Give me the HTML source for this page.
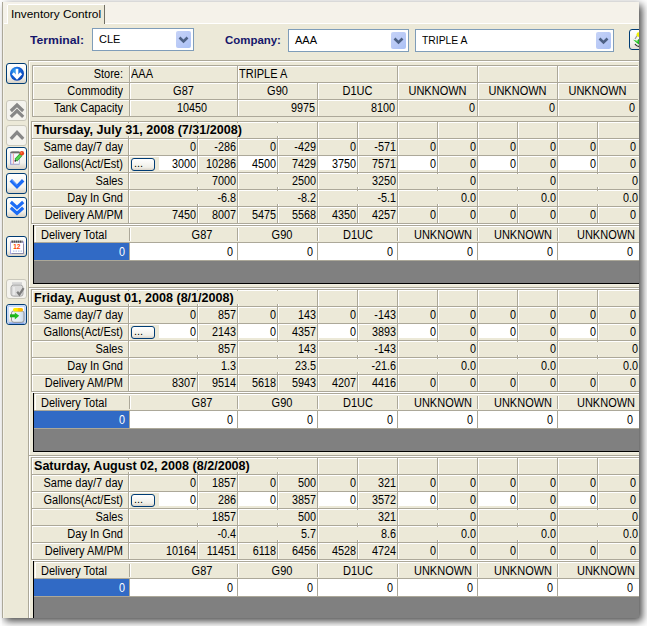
<!DOCTYPE html><html><head><meta charset="utf-8"><style>
html,body{margin:0;padding:0;}
body{width:647px;height:626px;position:relative;overflow:hidden;background:#fff;font-family:"Liberation Sans",sans-serif;font-size:11px;color:#000;}
body>div,body>svg,#w>div,#w>svg{position:absolute;}
.t{white-space:nowrap;line-height:13px;height:13px;}
</style></head><body>
<div style="left:2px;top:2px;width:637px;height:616px;background:#ece9d8;box-shadow:3px 3px 8px rgba(0,0,0,0.75)"></div>
<div style="left:0;top:2px;width:2px;height:624px;background:rgba(255,255,255,0.4)"></div>
<div id="w" style="left:0;top:0;width:639px;height:618px;overflow:hidden">

<div style="left:3px;top:2px;width:636px;height:21px;background:#f5f2ea;"></div>
<div style="left:2px;top:2px;width:1px;height:616px;background:#aca899;"></div>
<div style="left:3px;top:2px;width:1px;height:616px;background:#f4f2e8;"></div>
<div style="left:8px;top:5px;width:96px;height:18px;background:#ece9d8;"></div>
<div style="left:8px;top:4px;width:96px;height:1px;background:#ffffff;"></div>
<div style="left:7px;top:5px;width:1px;height:19px;background:#ffffff;"></div>
<div style="left:104px;top:5px;width:1px;height:19px;background:#716f64;"></div>
<div class="t" style="left:11px;top:8px;transform:scaleX(1.075);transform-origin:left top;">Inventory Control</div>
<div style="left:4px;top:23px;width:3px;height:1px;background:#ffffff;"></div>
<div style="left:105px;top:23px;width:534px;height:1px;background:#ffffff;"></div>
<div style="left:4px;top:24px;width:634px;height:593px;background:#ece9d8;"></div>
<div class="t" style="left:30px;top:34px;font-weight:bold;color:#15166a;transform:scaleX(1.11);transform-origin:left top;">Terminal:</div>
<div class="t" style="left:225px;top:34px;font-weight:bold;color:#15166a;transform:scaleX(1.04);transform-origin:left top;">Company:</div>
<div style="left:92px;top:28px;width:100px;height:21px;border:1px solid #7f9db9;background:#fff"></div>
<div style="left:176px;top:31px;width:15px;height:17px;border-radius:2px;background:linear-gradient(135deg,#c6d3f7 0%,#b7c8f6 60%,#a9c1f6 100%)"></div>
<svg style="left:176px;top:31px" width="15" height="17"><path d="M3.5 6.5 L7.5 10.5 L11.5 6.5" stroke="#4d6185" stroke-width="2.6" fill="none"/></svg>
<div class="t" style="left:99px;top:33px;">CLE</div>
<div style="left:288px;top:29px;width:119px;height:21px;border:1px solid #7f9db9;background:#fff"></div>
<div style="left:391px;top:32px;width:15px;height:17px;border-radius:2px;background:linear-gradient(135deg,#c6d3f7 0%,#b7c8f6 60%,#a9c1f6 100%)"></div>
<svg style="left:391px;top:32px" width="15" height="17"><path d="M3.5 6.5 L7.5 10.5 L11.5 6.5" stroke="#4d6185" stroke-width="2.6" fill="none"/></svg>
<div class="t" style="left:295px;top:34px;">AAA</div>
<div style="left:415px;top:29px;width:197px;height:21px;border:1px solid #7f9db9;background:#fff"></div>
<div style="left:596px;top:32px;width:15px;height:17px;border-radius:2px;background:linear-gradient(135deg,#c6d3f7 0%,#b7c8f6 60%,#a9c1f6 100%)"></div>
<svg style="left:596px;top:32px" width="15" height="17"><path d="M3.5 6.5 L7.5 10.5 L11.5 6.5" stroke="#4d6185" stroke-width="2.6" fill="none"/></svg>
<div class="t" style="left:422px;top:34px;transform:scaleX(0.94);transform-origin:left top;">TRIPLE A</div>
<div style="left:6px;top:63px;width:19px;height:19px;border:1px solid #003c74;border-radius:3px;background:linear-gradient(#ffffff,#f3f2ec 70%,#d6d0c5)"></div>
<svg style="left:6px;top:63px" width="21" height="21" viewBox="0 0 21 21"><defs><radialGradient id="gc" cx="0.35" cy="0.3" r="0.75"><stop offset="0" stop-color="#39a6f2"/><stop offset="0.45" stop-color="#1466dc"/><stop offset="1" stop-color="#0a3fae"/></radialGradient></defs><circle cx="11" cy="10.8" r="7" fill="url(#gc)"/><path d="M11 5.8 V13.5" stroke="#fff" stroke-width="2.6" fill="none"/><path d="M6.8 10.2 L11 14.6 L15.2 10.2" stroke="#fff" stroke-width="2.8" fill="none" stroke-linejoin="miter"/></svg>
<div style="left:6px;top:100px;width:19px;height:19px;border:1px solid #cac8bb;border-radius:3px;background:#f4f3ee"></div>
<svg style="left:6px;top:100px" width="21" height="21" viewBox="0 0 21 21"><path d="M4.8 11 L11 5 L17.2 11 M4.8 16.8 L11 10.8 L17.2 16.8" stroke="#878787" stroke-width="3.2" fill="none"/></svg>
<div style="left:6px;top:125px;width:19px;height:19px;border:1px solid #cac8bb;border-radius:3px;background:#f4f3ee"></div>
<svg style="left:6px;top:125px" width="21" height="21" viewBox="0 0 21 21"><path d="M4.8 13.8 L11 7.4 L17.2 13.8" stroke="#878787" stroke-width="3.2" fill="none"/></svg>
<div style="left:6px;top:147px;width:19px;height:21px;border:1px solid #003c74;border-radius:3px;background:linear-gradient(#ffffff,#f3f2ec 70%,#d6d0c5)"></div>
<svg style="left:6px;top:147px" width="21" height="23" viewBox="0 0 21 23"><defs><linearGradient id="bind" x1="0" y1="0" x2="0" y2="1"><stop offset="0" stop-color="#c8c8c8"/><stop offset="0.5" stop-color="#5a5a5a"/><stop offset="1" stop-color="#9a9a9a"/></linearGradient><linearGradient id="pg" x1="0" x2="1"><stop offset="0" stop-color="#e6f0ff"/><stop offset="1" stop-color="#ffffff"/></linearGradient></defs><path d="M4.6 5.5 H13.4 V17.6 H4.6 Z" fill="url(#pg)" stroke="#b0b0d8" stroke-width="0.9"/><path d="M4.2 6 Q4.2 4 6.5 4 H12.8 Q14 4 14 5.5 L14 6.4 H4.2 Z" fill="url(#bind)"/><path d="M4.6 7 V17.6" stroke="#9c9ce0" stroke-width="1.1"/><path d="M7.4 6.5 V17" stroke="#f4a0a0" stroke-width="1"/><path d="M5 17.2 H13" stroke="#a8a8c8" stroke-width="0.8"/><path d="M9.8 13.2 L15.2 7.5" stroke="#2a9a2a" stroke-width="3.6"/><path d="M9.8 13.2 L15.2 7.5" stroke="#52d852" stroke-width="2.2"/><path d="M8.8 14.4 L10 13" stroke="#303030" stroke-width="1.6"/><circle cx="15.9" cy="6.3" r="2.2" fill="#e8401a"/><circle cx="15.4" cy="5.8" r="0.9" fill="#ff8040"/></svg>
<div style="left:6px;top:173px;width:19px;height:19px;border:1px solid #003c74;border-radius:3px;background:linear-gradient(#ffffff,#f3f2ec 70%,#d6d0c5)"></div>
<svg style="left:6px;top:173px" width="21" height="21" viewBox="0 0 21 21"><path d="M4.8 7.2 L11 13.6 L17.2 7.2" stroke="#1c6cf6" stroke-width="3.4" fill="none"/><path d="M5.6 6.8 L11 12.4" stroke="#7fb0ff" stroke-width="0.8" fill="none"/></svg>
<div style="left:6px;top:197px;width:19px;height:19px;border:1px solid #003c74;border-radius:3px;background:linear-gradient(#ffffff,#f3f2ec 70%,#d6d0c5)"></div>
<svg style="left:6px;top:197px" width="21" height="21" viewBox="0 0 21 21"><path d="M4.8 5 L11 10.6 L17.2 5 M4.8 10.8 L11 16.4 L17.2 10.8" stroke="#1c6cf6" stroke-width="3.2" fill="none"/></svg>
<div style="left:6px;top:236px;width:19px;height:19px;border:1px solid #003c74;border-radius:3px;background:linear-gradient(#ffffff,#f3f2ec 70%,#d6d0c5)"></div>
<svg style="left:6px;top:236px" width="21" height="21" viewBox="0 0 21 21"><rect x="4.5" y="6" width="13" height="11.5" fill="#fff" stroke="#a8a8e4" stroke-width="1"/><path d="M17.5 8 V17.5 H6" stroke="#8888a0" stroke-width="0.8" fill="none"/><path d="M5.5 5.6 H16.5" stroke="#404040" stroke-width="2.4" stroke-dasharray="1.4 0.6"/><text x="7.2" y="13.2" font-family="Liberation Sans" font-weight="bold" font-size="6.6" fill="#ff4800">12</text><path d="M7 15.2 H16" stroke="#b8c8f0" stroke-width="1.2" stroke-dasharray="1.5 1"/></svg>
<div style="left:6px;top:279px;width:19px;height:18px;border:1px solid #cac8bb;border-radius:3px;background:#f4f3ee"></div>
<svg style="left:6px;top:279px" width="21" height="20" viewBox="0 0 21 20"><rect x="6" y="3.2" width="10" height="3" fill="#d4d4d4"/><path d="M5 8.5 Q5 6.2 7.5 6.2 H14.5 Q17 6.2 17 8.5 V15 Q17 17.2 14.5 17.2 H7.5 Q5 17.2 5 15 Z" fill="#dadada" stroke="#a4a4a4" stroke-width="0.9"/><path d="M8 8 V16" stroke="#eeeeee" stroke-width="1.5"/><path d="M11.2 12.8 L13.4 15.6 L17.6 9.2" stroke="#7c7c7c" stroke-width="2.2" fill="none"/></svg>
<div style="left:6px;top:304px;width:19px;height:19px;border:1px solid #003c74;border-radius:3px;background:linear-gradient(#ffffff,#f3f2ec 70%,#d6d0c5)"></div>
<svg style="left:6px;top:304px" width="21" height="21" viewBox="0 0 21 21"><defs><linearGradient id="lid" x1="0" x2="1"><stop offset="0" stop-color="#fff000"/><stop offset="0.5" stop-color="#ffe000"/><stop offset="0.55" stop-color="#ffc000"/><stop offset="1" stop-color="#f8b000"/></linearGradient><linearGradient id="jar" x1="0" x2="1"><stop offset="0" stop-color="#f4f4f4"/><stop offset="0.6" stop-color="#e4eef8"/><stop offset="1" stop-color="#c8d8e8"/></linearGradient></defs><rect x="2" y="2" width="17" height="17" rx="1" fill="none" stroke="#b4cdf6" stroke-width="1.4"/><path d="M3 19.2 H18" stroke="#7aa0f0" stroke-width="1.2"/><path d="M5.5 9 Q5.5 7 7.5 7 H16 Q18 7 18 9 V16 Q18 18.3 15.5 18.3 H8 Q5.5 18.3 5.5 16 Z" fill="url(#jar)" stroke="#8c8c8c" stroke-width="0.9"/><rect x="7" y="4" width="10" height="3.4" rx="1.6" fill="url(#lid)"/><path d="M4 11.8 H9.8" stroke="#18b018" stroke-width="3" fill="none"/><path d="M8.8 8.6 L13.2 11.8 L8.8 15.4 Z" fill="#20c020"/></svg>
<div style="left:629px;top:29px;width:10px;height:21px;overflow:hidden"><div style="position:absolute;left:0;top:0;width:19px;height:19px;border:1px solid #003c74;border-radius:3px;background:linear-gradient(#fff,#f3f2ee 70%,#e0dcd2)"></div><svg style="position:absolute;left:0;top:0" width="21" height="21"><path d="M8.2 6.5 L6 10" stroke="#999" stroke-width="1.2" fill="none"/><path d="M6 15 Q7.5 17.5 10 17.5" stroke="#333" stroke-width="1.3" fill="none"/><circle cx="9.8" cy="5.6" r="2.3" fill="#f4f400"/><path d="M3.8 10.6 L8 12.2 L9.2 10.2 L10 10.2 L10 15.5 L8.5 14.6 Z" fill="#18b818"/><path d="M6 11.5 L9.5 13" stroke="#60e060" stroke-width="1" fill="none"/></svg></div>
<div style="left:28px;top:60px;width:1px;height:558px;background:#aca899;"></div>
<div style="left:29px;top:61px;width:1px;height:557px;background:#ffffff;"></div>
<div style="left:28px;top:60px;width:611px;height:1px;background:#aca899;"></div>
<div style="left:29px;top:61px;width:610px;height:1px;background:#ffffff;"></div>
<div style="left:32px;top:65px;width:606px;height:1px;background:#aca899;"></div>
<div style="left:33px;top:66px;width:605px;height:1px;background:#ffffff;"></div>
<div style="left:129px;top:65px;width:1px;height:17px;background:#aca899;"></div>
<div style="left:130px;top:66px;width:1px;height:16px;background:#ffffff;"></div>
<div style="left:237px;top:65px;width:1px;height:17px;background:#aca899;"></div>
<div style="left:238px;top:66px;width:1px;height:16px;background:#ffffff;"></div>
<div style="left:397px;top:65px;width:1px;height:17px;background:#aca899;"></div>
<div style="left:398px;top:66px;width:1px;height:16px;background:#ffffff;"></div>
<div style="left:477px;top:65px;width:1px;height:17px;background:#aca899;"></div>
<div style="left:478px;top:66px;width:1px;height:16px;background:#ffffff;"></div>
<div style="left:557px;top:65px;width:1px;height:17px;background:#aca899;"></div>
<div style="left:558px;top:66px;width:1px;height:16px;background:#ffffff;"></div>
<div style="left:32px;top:65px;width:1px;height:17px;background:#aca899;"></div>
<div style="left:33px;top:66px;width:1px;height:16px;background:#ffffff;"></div>
<div style="left:32px;top:82px;width:606px;height:1px;background:#aca899;"></div>
<div style="left:33px;top:83px;width:605px;height:1px;background:#ffffff;"></div>
<div style="left:129px;top:82px;width:1px;height:17px;background:#aca899;"></div>
<div style="left:130px;top:83px;width:1px;height:16px;background:#ffffff;"></div>
<div style="left:237px;top:82px;width:1px;height:17px;background:#aca899;"></div>
<div style="left:238px;top:83px;width:1px;height:16px;background:#ffffff;"></div>
<div style="left:317px;top:82px;width:1px;height:17px;background:#aca899;"></div>
<div style="left:318px;top:83px;width:1px;height:16px;background:#ffffff;"></div>
<div style="left:397px;top:82px;width:1px;height:17px;background:#aca899;"></div>
<div style="left:398px;top:83px;width:1px;height:16px;background:#ffffff;"></div>
<div style="left:477px;top:82px;width:1px;height:17px;background:#aca899;"></div>
<div style="left:478px;top:83px;width:1px;height:16px;background:#ffffff;"></div>
<div style="left:557px;top:82px;width:1px;height:17px;background:#aca899;"></div>
<div style="left:558px;top:83px;width:1px;height:16px;background:#ffffff;"></div>
<div style="left:32px;top:82px;width:1px;height:17px;background:#aca899;"></div>
<div style="left:33px;top:83px;width:1px;height:16px;background:#ffffff;"></div>
<div style="left:32px;top:99px;width:606px;height:1px;background:#aca899;"></div>
<div style="left:33px;top:100px;width:605px;height:1px;background:#ffffff;"></div>
<div style="left:129px;top:99px;width:1px;height:17px;background:#aca899;"></div>
<div style="left:130px;top:100px;width:1px;height:16px;background:#ffffff;"></div>
<div style="left:237px;top:99px;width:1px;height:17px;background:#aca899;"></div>
<div style="left:238px;top:100px;width:1px;height:16px;background:#ffffff;"></div>
<div style="left:317px;top:99px;width:1px;height:17px;background:#aca899;"></div>
<div style="left:318px;top:100px;width:1px;height:16px;background:#ffffff;"></div>
<div style="left:397px;top:99px;width:1px;height:17px;background:#aca899;"></div>
<div style="left:398px;top:100px;width:1px;height:16px;background:#ffffff;"></div>
<div style="left:477px;top:99px;width:1px;height:17px;background:#aca899;"></div>
<div style="left:478px;top:100px;width:1px;height:16px;background:#ffffff;"></div>
<div style="left:557px;top:99px;width:1px;height:17px;background:#aca899;"></div>
<div style="left:558px;top:100px;width:1px;height:16px;background:#ffffff;"></div>
<div style="left:32px;top:99px;width:1px;height:17px;background:#aca899;"></div>
<div style="left:33px;top:100px;width:1px;height:16px;background:#ffffff;"></div>
<div style="left:32px;top:116px;width:606px;height:1px;background:#aca899;"></div>
<div class="t" style="left:-77px;top:67px;width:200px;text-align:right;font-size:12px;line-height:14px;height:14px;transform:scaleX(0.917);transform-origin:right top;">Store:</div>
<div class="t" style="left:131px;top:67px;font-size:12px;line-height:14px;height:14px;transform:scaleX(0.917);transform-origin:left top;">AAA</div>
<div class="t" style="left:239px;top:67px;font-size:12px;line-height:14px;height:14px;transform:scaleX(0.917);transform-origin:left top;">TRIPLE A</div>
<div class="t" style="left:-77px;top:84px;width:200px;text-align:right;font-size:12px;line-height:14px;height:14px;transform:scaleX(0.917);transform-origin:right top;">Commodity</div>
<div class="t" style="left:130px;top:84px;width:107px;text-align:center;font-size:12px;line-height:14px;height:14px;transform:scaleX(0.917);transform-origin:center top;">G87</div>
<div class="t" style="left:238px;top:84px;width:79px;text-align:center;font-size:12px;line-height:14px;height:14px;transform:scaleX(0.917);transform-origin:center top;">G90</div>
<div class="t" style="left:318px;top:84px;width:79px;text-align:center;font-size:12px;line-height:14px;height:14px;transform:scaleX(0.917);transform-origin:center top;">D1UC</div>
<div class="t" style="left:398px;top:84px;width:79px;text-align:center;font-size:12px;line-height:14px;height:14px;transform:scaleX(0.917);transform-origin:center top;">UNKNOWN</div>
<div class="t" style="left:478px;top:84px;width:79px;text-align:center;font-size:12px;line-height:14px;height:14px;transform:scaleX(0.917);transform-origin:center top;">UNKNOWN</div>
<div class="t" style="left:558px;top:84px;width:79px;text-align:center;font-size:12px;line-height:14px;height:14px;transform:scaleX(0.917);transform-origin:center top;">UNKNOWN</div>
<div class="t" style="left:-77px;top:101px;width:200px;text-align:right;font-size:12px;line-height:14px;height:14px;transform:scaleX(0.917);transform-origin:right top;">Tank Capacity</div>
<div class="t" style="left:7px;top:101px;width:200px;text-align:right;font-size:12px;line-height:14px;height:14px;transform:scaleX(0.9);transform-origin:right top;">10450</div>
<div class="t" style="left:115px;top:101px;width:200px;text-align:right;font-size:12px;line-height:14px;height:14px;transform:scaleX(0.9);transform-origin:right top;">9975</div>
<div class="t" style="left:195px;top:101px;width:200px;text-align:right;font-size:12px;line-height:14px;height:14px;transform:scaleX(0.9);transform-origin:right top;">8100</div>
<div class="t" style="left:275px;top:101px;width:200px;text-align:right;font-size:12px;line-height:14px;height:14px;transform:scaleX(0.9);transform-origin:right top;">0</div>
<div class="t" style="left:355px;top:101px;width:200px;text-align:right;font-size:12px;line-height:14px;height:14px;transform:scaleX(0.9);transform-origin:right top;">0</div>
<div class="t" style="left:435px;top:101px;width:200px;text-align:right;font-size:12px;line-height:14px;height:14px;transform:scaleX(0.9);transform-origin:right top;">0</div>
<div style="left:31px;top:121px;width:608px;height:1px;background:#aca899;"></div>
<div style="left:32px;top:122px;width:607px;height:1px;background:#ffffff;"></div>
<div style="left:317px;top:121px;width:1px;height:17px;background:#aca899;"></div>
<div style="left:318px;top:122px;width:1px;height:16px;background:#ffffff;"></div>
<div style="left:357px;top:121px;width:1px;height:17px;background:#aca899;"></div>
<div style="left:358px;top:122px;width:1px;height:16px;background:#ffffff;"></div>
<div style="left:397px;top:121px;width:1px;height:17px;background:#aca899;"></div>
<div style="left:398px;top:122px;width:1px;height:16px;background:#ffffff;"></div>
<div style="left:437px;top:121px;width:1px;height:17px;background:#aca899;"></div>
<div style="left:438px;top:122px;width:1px;height:16px;background:#ffffff;"></div>
<div style="left:477px;top:121px;width:1px;height:17px;background:#aca899;"></div>
<div style="left:478px;top:122px;width:1px;height:16px;background:#ffffff;"></div>
<div style="left:517px;top:121px;width:1px;height:17px;background:#aca899;"></div>
<div style="left:518px;top:122px;width:1px;height:16px;background:#ffffff;"></div>
<div style="left:557px;top:121px;width:1px;height:17px;background:#aca899;"></div>
<div style="left:558px;top:122px;width:1px;height:16px;background:#ffffff;"></div>
<div style="left:597px;top:121px;width:1px;height:17px;background:#aca899;"></div>
<div style="left:598px;top:122px;width:1px;height:16px;background:#ffffff;"></div>
<div style="left:31px;top:121px;width:1px;height:103px;background:#aca899;"></div>
<div style="left:32px;top:122px;width:1px;height:102px;background:#ffffff;"></div>
<div style="left:128px;top:122px;width:1px;height:1px;background:#aca899;"></div>
<div style="left:128px;top:136px;width:1px;height:2px;background:#aca899;"></div>
<div style="left:129px;top:136px;width:1px;height:2px;background:#ffffff;"></div>
<div style="left:197px;top:122px;width:1px;height:1px;background:#aca899;"></div>
<div style="left:197px;top:136px;width:1px;height:2px;background:#aca899;"></div>
<div style="left:198px;top:136px;width:1px;height:2px;background:#ffffff;"></div>
<div style="left:237px;top:122px;width:1px;height:1px;background:#aca899;"></div>
<div style="left:237px;top:136px;width:1px;height:2px;background:#aca899;"></div>
<div style="left:238px;top:136px;width:1px;height:2px;background:#ffffff;"></div>
<div style="left:277px;top:122px;width:1px;height:1px;background:#aca899;"></div>
<div style="left:277px;top:136px;width:1px;height:2px;background:#aca899;"></div>
<div style="left:278px;top:136px;width:1px;height:2px;background:#ffffff;"></div>
<div class="t" style="left:34px;top:123px;font-weight:bold;font-size:12px;line-height:14px;height:14px;transform:scaleX(1.047);transform-origin:left top;">Thursday, July 31, 2008 (7/31/2008)</div>
<div style="left:31px;top:138px;width:608px;height:1px;background:#aca899;"></div>
<div style="left:32px;top:139px;width:607px;height:1px;background:#ffffff;"></div>
<div style="left:128px;top:138px;width:1px;height:17px;background:#aca899;"></div>
<div style="left:129px;top:139px;width:1px;height:16px;background:#ffffff;"></div>
<div style="left:197px;top:138px;width:1px;height:17px;background:#aca899;"></div>
<div style="left:198px;top:139px;width:1px;height:16px;background:#ffffff;"></div>
<div style="left:237px;top:138px;width:1px;height:17px;background:#aca899;"></div>
<div style="left:238px;top:139px;width:1px;height:16px;background:#ffffff;"></div>
<div style="left:277px;top:138px;width:1px;height:17px;background:#aca899;"></div>
<div style="left:278px;top:139px;width:1px;height:16px;background:#ffffff;"></div>
<div style="left:317px;top:138px;width:1px;height:17px;background:#aca899;"></div>
<div style="left:318px;top:139px;width:1px;height:16px;background:#ffffff;"></div>
<div style="left:357px;top:138px;width:1px;height:17px;background:#aca899;"></div>
<div style="left:358px;top:139px;width:1px;height:16px;background:#ffffff;"></div>
<div style="left:397px;top:138px;width:1px;height:17px;background:#aca899;"></div>
<div style="left:398px;top:139px;width:1px;height:16px;background:#ffffff;"></div>
<div style="left:437px;top:138px;width:1px;height:17px;background:#aca899;"></div>
<div style="left:438px;top:139px;width:1px;height:16px;background:#ffffff;"></div>
<div style="left:477px;top:138px;width:1px;height:17px;background:#aca899;"></div>
<div style="left:478px;top:139px;width:1px;height:16px;background:#ffffff;"></div>
<div style="left:517px;top:138px;width:1px;height:17px;background:#aca899;"></div>
<div style="left:518px;top:139px;width:1px;height:16px;background:#ffffff;"></div>
<div style="left:557px;top:138px;width:1px;height:17px;background:#aca899;"></div>
<div style="left:558px;top:139px;width:1px;height:16px;background:#ffffff;"></div>
<div style="left:597px;top:138px;width:1px;height:17px;background:#aca899;"></div>
<div style="left:598px;top:139px;width:1px;height:16px;background:#ffffff;"></div>
<div class="t" style="left:-77px;top:140px;width:200px;text-align:right;font-size:12px;line-height:14px;height:14px;transform:scaleX(0.917);transform-origin:right top;">Same day/7 day</div>
<div class="t" style="left:-4px;top:140px;width:200px;text-align:right;font-size:12px;line-height:14px;height:14px;transform:scaleX(0.9);transform-origin:right top;">0</div>
<div class="t" style="left:36px;top:140px;width:200px;text-align:right;font-size:12px;line-height:14px;height:14px;transform:scaleX(0.9);transform-origin:right top;">-286</div>
<div class="t" style="left:76px;top:140px;width:200px;text-align:right;font-size:12px;line-height:14px;height:14px;transform:scaleX(0.9);transform-origin:right top;">0</div>
<div class="t" style="left:116px;top:140px;width:200px;text-align:right;font-size:12px;line-height:14px;height:14px;transform:scaleX(0.9);transform-origin:right top;">-429</div>
<div class="t" style="left:156px;top:140px;width:200px;text-align:right;font-size:12px;line-height:14px;height:14px;transform:scaleX(0.9);transform-origin:right top;">0</div>
<div class="t" style="left:196px;top:140px;width:200px;text-align:right;font-size:12px;line-height:14px;height:14px;transform:scaleX(0.9);transform-origin:right top;">-571</div>
<div class="t" style="left:236px;top:140px;width:200px;text-align:right;font-size:12px;line-height:14px;height:14px;transform:scaleX(0.9);transform-origin:right top;">0</div>
<div class="t" style="left:276px;top:140px;width:200px;text-align:right;font-size:12px;line-height:14px;height:14px;transform:scaleX(0.9);transform-origin:right top;">0</div>
<div class="t" style="left:316px;top:140px;width:200px;text-align:right;font-size:12px;line-height:14px;height:14px;transform:scaleX(0.9);transform-origin:right top;">0</div>
<div class="t" style="left:356px;top:140px;width:200px;text-align:right;font-size:12px;line-height:14px;height:14px;transform:scaleX(0.9);transform-origin:right top;">0</div>
<div class="t" style="left:396px;top:140px;width:200px;text-align:right;font-size:12px;line-height:14px;height:14px;transform:scaleX(0.9);transform-origin:right top;">0</div>
<div class="t" style="left:436px;top:140px;width:200px;text-align:right;font-size:12px;line-height:14px;height:14px;transform:scaleX(0.9);transform-origin:right top;">0</div>
<div style="left:31px;top:155px;width:608px;height:1px;background:#aca899;"></div>
<div style="left:32px;top:156px;width:607px;height:1px;background:#ffffff;"></div>
<div style="left:128px;top:155px;width:1px;height:17px;background:#aca899;"></div>
<div style="left:129px;top:156px;width:1px;height:16px;background:#ffffff;"></div>
<div style="left:197px;top:155px;width:1px;height:17px;background:#aca899;"></div>
<div style="left:198px;top:156px;width:1px;height:16px;background:#ffffff;"></div>
<div style="left:237px;top:155px;width:1px;height:17px;background:#aca899;"></div>
<div style="left:238px;top:156px;width:1px;height:16px;background:#ffffff;"></div>
<div style="left:277px;top:155px;width:1px;height:17px;background:#aca899;"></div>
<div style="left:278px;top:156px;width:1px;height:16px;background:#ffffff;"></div>
<div style="left:317px;top:155px;width:1px;height:17px;background:#aca899;"></div>
<div style="left:318px;top:156px;width:1px;height:16px;background:#ffffff;"></div>
<div style="left:357px;top:155px;width:1px;height:17px;background:#aca899;"></div>
<div style="left:358px;top:156px;width:1px;height:16px;background:#ffffff;"></div>
<div style="left:397px;top:155px;width:1px;height:17px;background:#aca899;"></div>
<div style="left:398px;top:156px;width:1px;height:16px;background:#ffffff;"></div>
<div style="left:437px;top:155px;width:1px;height:17px;background:#aca899;"></div>
<div style="left:438px;top:156px;width:1px;height:16px;background:#ffffff;"></div>
<div style="left:477px;top:155px;width:1px;height:17px;background:#aca899;"></div>
<div style="left:478px;top:156px;width:1px;height:16px;background:#ffffff;"></div>
<div style="left:517px;top:155px;width:1px;height:17px;background:#aca899;"></div>
<div style="left:518px;top:156px;width:1px;height:16px;background:#ffffff;"></div>
<div style="left:557px;top:155px;width:1px;height:17px;background:#aca899;"></div>
<div style="left:558px;top:156px;width:1px;height:16px;background:#ffffff;"></div>
<div style="left:597px;top:155px;width:1px;height:17px;background:#aca899;"></div>
<div style="left:598px;top:156px;width:1px;height:16px;background:#ffffff;"></div>
<div class="t" style="left:-77px;top:157px;width:200px;text-align:right;font-size:12px;line-height:14px;height:14px;transform:scaleX(0.917);transform-origin:right top;">Gallons(Act/Est)</div>
<div style="left:131px;top:158px;width:22px;height:11px;border:1px solid #003c74;border-radius:3px;background:linear-gradient(#fff,#f0efe8 75%,#d9d3c8)"></div>
<div class="t" style="left:134px;top:157px;">...</div>
<div style="left:159px;top:157px;width:38px;height:13px;background:#ffffff;"></div>
<div style="left:238px;top:156px;width:39px;height:14px;background:#ffffff;"></div>
<div style="left:318px;top:156px;width:39px;height:14px;background:#ffffff;"></div>
<div style="left:398px;top:156px;width:39px;height:14px;background:#ffffff;"></div>
<div style="left:478px;top:156px;width:39px;height:14px;background:#ffffff;"></div>
<div style="left:558px;top:156px;width:39px;height:14px;background:#ffffff;"></div>
<div class="t" style="left:-4px;top:157px;width:200px;text-align:right;font-size:12px;line-height:14px;height:14px;transform:scaleX(0.9);transform-origin:right top;">3000</div>
<div class="t" style="left:36px;top:157px;width:200px;text-align:right;font-size:12px;line-height:14px;height:14px;transform:scaleX(0.9);transform-origin:right top;">10286</div>
<div class="t" style="left:76px;top:157px;width:200px;text-align:right;font-size:12px;line-height:14px;height:14px;transform:scaleX(0.9);transform-origin:right top;">4500</div>
<div class="t" style="left:116px;top:157px;width:200px;text-align:right;font-size:12px;line-height:14px;height:14px;transform:scaleX(0.9);transform-origin:right top;">7429</div>
<div class="t" style="left:156px;top:157px;width:200px;text-align:right;font-size:12px;line-height:14px;height:14px;transform:scaleX(0.9);transform-origin:right top;">3750</div>
<div class="t" style="left:196px;top:157px;width:200px;text-align:right;font-size:12px;line-height:14px;height:14px;transform:scaleX(0.9);transform-origin:right top;">7571</div>
<div class="t" style="left:236px;top:157px;width:200px;text-align:right;font-size:12px;line-height:14px;height:14px;transform:scaleX(0.9);transform-origin:right top;">0</div>
<div class="t" style="left:276px;top:157px;width:200px;text-align:right;font-size:12px;line-height:14px;height:14px;transform:scaleX(0.9);transform-origin:right top;">0</div>
<div class="t" style="left:316px;top:157px;width:200px;text-align:right;font-size:12px;line-height:14px;height:14px;transform:scaleX(0.9);transform-origin:right top;">0</div>
<div class="t" style="left:356px;top:157px;width:200px;text-align:right;font-size:12px;line-height:14px;height:14px;transform:scaleX(0.9);transform-origin:right top;">0</div>
<div class="t" style="left:396px;top:157px;width:200px;text-align:right;font-size:12px;line-height:14px;height:14px;transform:scaleX(0.9);transform-origin:right top;">0</div>
<div class="t" style="left:436px;top:157px;width:200px;text-align:right;font-size:12px;line-height:14px;height:14px;transform:scaleX(0.9);transform-origin:right top;">0</div>
<div style="left:31px;top:172px;width:608px;height:1px;background:#aca899;"></div>
<div style="left:32px;top:173px;width:607px;height:1px;background:#ffffff;"></div>
<div style="left:128px;top:172px;width:1px;height:17px;background:#aca899;"></div>
<div style="left:129px;top:173px;width:1px;height:16px;background:#ffffff;"></div>
<div style="left:237px;top:172px;width:1px;height:17px;background:#aca899;"></div>
<div style="left:238px;top:173px;width:1px;height:16px;background:#ffffff;"></div>
<div style="left:317px;top:172px;width:1px;height:17px;background:#aca899;"></div>
<div style="left:318px;top:173px;width:1px;height:16px;background:#ffffff;"></div>
<div style="left:397px;top:172px;width:1px;height:17px;background:#aca899;"></div>
<div style="left:398px;top:173px;width:1px;height:16px;background:#ffffff;"></div>
<div style="left:477px;top:172px;width:1px;height:17px;background:#aca899;"></div>
<div style="left:478px;top:173px;width:1px;height:16px;background:#ffffff;"></div>
<div style="left:557px;top:172px;width:1px;height:17px;background:#aca899;"></div>
<div style="left:558px;top:173px;width:1px;height:16px;background:#ffffff;"></div>
<div style="left:197px;top:173px;width:1px;height:1px;background:#aca899;"></div>
<div style="left:197px;top:187px;width:1px;height:2px;background:#aca899;"></div>
<div style="left:198px;top:187px;width:1px;height:2px;background:#ffffff;"></div>
<div style="left:277px;top:173px;width:1px;height:1px;background:#aca899;"></div>
<div style="left:277px;top:187px;width:1px;height:2px;background:#aca899;"></div>
<div style="left:278px;top:187px;width:1px;height:2px;background:#ffffff;"></div>
<div style="left:357px;top:173px;width:1px;height:1px;background:#aca899;"></div>
<div style="left:357px;top:187px;width:1px;height:2px;background:#aca899;"></div>
<div style="left:358px;top:187px;width:1px;height:2px;background:#ffffff;"></div>
<div style="left:437px;top:173px;width:1px;height:1px;background:#aca899;"></div>
<div style="left:437px;top:187px;width:1px;height:2px;background:#aca899;"></div>
<div style="left:438px;top:187px;width:1px;height:2px;background:#ffffff;"></div>
<div style="left:517px;top:173px;width:1px;height:1px;background:#aca899;"></div>
<div style="left:517px;top:187px;width:1px;height:2px;background:#aca899;"></div>
<div style="left:518px;top:187px;width:1px;height:2px;background:#ffffff;"></div>
<div style="left:597px;top:173px;width:1px;height:1px;background:#aca899;"></div>
<div style="left:597px;top:187px;width:1px;height:2px;background:#aca899;"></div>
<div style="left:598px;top:187px;width:1px;height:2px;background:#ffffff;"></div>
<div class="t" style="left:-77px;top:174px;width:200px;text-align:right;font-size:12px;line-height:14px;height:14px;transform:scaleX(0.917);transform-origin:right top;">Sales</div>
<div class="t" style="left:36px;top:174px;width:200px;text-align:right;font-size:12px;line-height:14px;height:14px;transform:scaleX(0.9);transform-origin:right top;">7000</div>
<div class="t" style="left:116px;top:174px;width:200px;text-align:right;font-size:12px;line-height:14px;height:14px;transform:scaleX(0.9);transform-origin:right top;">2500</div>
<div class="t" style="left:196px;top:174px;width:200px;text-align:right;font-size:12px;line-height:14px;height:14px;transform:scaleX(0.9);transform-origin:right top;">3250</div>
<div class="t" style="left:276px;top:174px;width:200px;text-align:right;font-size:12px;line-height:14px;height:14px;transform:scaleX(0.9);transform-origin:right top;">0</div>
<div class="t" style="left:356px;top:174px;width:200px;text-align:right;font-size:12px;line-height:14px;height:14px;transform:scaleX(0.9);transform-origin:right top;">0</div>
<div class="t" style="left:438px;top:174px;width:200px;text-align:right;font-size:12px;line-height:14px;height:14px;transform:scaleX(0.9);transform-origin:right top;">0</div>
<div style="left:31px;top:189px;width:608px;height:1px;background:#aca899;"></div>
<div style="left:32px;top:190px;width:607px;height:1px;background:#ffffff;"></div>
<div style="left:128px;top:189px;width:1px;height:17px;background:#aca899;"></div>
<div style="left:129px;top:190px;width:1px;height:16px;background:#ffffff;"></div>
<div style="left:237px;top:189px;width:1px;height:17px;background:#aca899;"></div>
<div style="left:238px;top:190px;width:1px;height:16px;background:#ffffff;"></div>
<div style="left:317px;top:189px;width:1px;height:17px;background:#aca899;"></div>
<div style="left:318px;top:190px;width:1px;height:16px;background:#ffffff;"></div>
<div style="left:397px;top:189px;width:1px;height:17px;background:#aca899;"></div>
<div style="left:398px;top:190px;width:1px;height:16px;background:#ffffff;"></div>
<div style="left:477px;top:189px;width:1px;height:17px;background:#aca899;"></div>
<div style="left:478px;top:190px;width:1px;height:16px;background:#ffffff;"></div>
<div style="left:557px;top:189px;width:1px;height:17px;background:#aca899;"></div>
<div style="left:558px;top:190px;width:1px;height:16px;background:#ffffff;"></div>
<div style="left:197px;top:190px;width:1px;height:1px;background:#aca899;"></div>
<div style="left:197px;top:204px;width:1px;height:2px;background:#aca899;"></div>
<div style="left:198px;top:204px;width:1px;height:2px;background:#ffffff;"></div>
<div style="left:277px;top:190px;width:1px;height:1px;background:#aca899;"></div>
<div style="left:277px;top:204px;width:1px;height:2px;background:#aca899;"></div>
<div style="left:278px;top:204px;width:1px;height:2px;background:#ffffff;"></div>
<div style="left:357px;top:190px;width:1px;height:1px;background:#aca899;"></div>
<div style="left:357px;top:204px;width:1px;height:2px;background:#aca899;"></div>
<div style="left:358px;top:204px;width:1px;height:2px;background:#ffffff;"></div>
<div style="left:437px;top:190px;width:1px;height:1px;background:#aca899;"></div>
<div style="left:437px;top:204px;width:1px;height:2px;background:#aca899;"></div>
<div style="left:438px;top:204px;width:1px;height:2px;background:#ffffff;"></div>
<div style="left:517px;top:190px;width:1px;height:1px;background:#aca899;"></div>
<div style="left:517px;top:204px;width:1px;height:2px;background:#aca899;"></div>
<div style="left:518px;top:204px;width:1px;height:2px;background:#ffffff;"></div>
<div style="left:597px;top:190px;width:1px;height:1px;background:#aca899;"></div>
<div style="left:597px;top:204px;width:1px;height:2px;background:#aca899;"></div>
<div style="left:598px;top:204px;width:1px;height:2px;background:#ffffff;"></div>
<div class="t" style="left:-77px;top:191px;width:200px;text-align:right;font-size:12px;line-height:14px;height:14px;transform:scaleX(0.917);transform-origin:right top;">Day In Gnd</div>
<div class="t" style="left:36px;top:191px;width:200px;text-align:right;font-size:12px;line-height:14px;height:14px;transform:scaleX(0.9);transform-origin:right top;">-6.8</div>
<div class="t" style="left:116px;top:191px;width:200px;text-align:right;font-size:12px;line-height:14px;height:14px;transform:scaleX(0.9);transform-origin:right top;">-8.2</div>
<div class="t" style="left:196px;top:191px;width:200px;text-align:right;font-size:12px;line-height:14px;height:14px;transform:scaleX(0.9);transform-origin:right top;">-5.1</div>
<div class="t" style="left:276px;top:191px;width:200px;text-align:right;font-size:12px;line-height:14px;height:14px;transform:scaleX(0.9);transform-origin:right top;">0.0</div>
<div class="t" style="left:356px;top:191px;width:200px;text-align:right;font-size:12px;line-height:14px;height:14px;transform:scaleX(0.9);transform-origin:right top;">0.0</div>
<div class="t" style="left:438px;top:191px;width:200px;text-align:right;font-size:12px;line-height:14px;height:14px;transform:scaleX(0.9);transform-origin:right top;">0.0</div>
<div style="left:31px;top:206px;width:608px;height:1px;background:#aca899;"></div>
<div style="left:32px;top:207px;width:607px;height:1px;background:#ffffff;"></div>
<div style="left:128px;top:206px;width:1px;height:17px;background:#aca899;"></div>
<div style="left:129px;top:207px;width:1px;height:16px;background:#ffffff;"></div>
<div style="left:197px;top:206px;width:1px;height:17px;background:#aca899;"></div>
<div style="left:198px;top:207px;width:1px;height:16px;background:#ffffff;"></div>
<div style="left:237px;top:206px;width:1px;height:17px;background:#aca899;"></div>
<div style="left:238px;top:207px;width:1px;height:16px;background:#ffffff;"></div>
<div style="left:277px;top:206px;width:1px;height:17px;background:#aca899;"></div>
<div style="left:278px;top:207px;width:1px;height:16px;background:#ffffff;"></div>
<div style="left:317px;top:206px;width:1px;height:17px;background:#aca899;"></div>
<div style="left:318px;top:207px;width:1px;height:16px;background:#ffffff;"></div>
<div style="left:357px;top:206px;width:1px;height:17px;background:#aca899;"></div>
<div style="left:358px;top:207px;width:1px;height:16px;background:#ffffff;"></div>
<div style="left:397px;top:206px;width:1px;height:17px;background:#aca899;"></div>
<div style="left:398px;top:207px;width:1px;height:16px;background:#ffffff;"></div>
<div style="left:437px;top:206px;width:1px;height:17px;background:#aca899;"></div>
<div style="left:438px;top:207px;width:1px;height:16px;background:#ffffff;"></div>
<div style="left:477px;top:206px;width:1px;height:17px;background:#aca899;"></div>
<div style="left:478px;top:207px;width:1px;height:16px;background:#ffffff;"></div>
<div style="left:517px;top:206px;width:1px;height:17px;background:#aca899;"></div>
<div style="left:518px;top:207px;width:1px;height:16px;background:#ffffff;"></div>
<div style="left:557px;top:206px;width:1px;height:17px;background:#aca899;"></div>
<div style="left:558px;top:207px;width:1px;height:16px;background:#ffffff;"></div>
<div style="left:597px;top:206px;width:1px;height:17px;background:#aca899;"></div>
<div style="left:598px;top:207px;width:1px;height:16px;background:#ffffff;"></div>
<div class="t" style="left:-77px;top:208px;width:200px;text-align:right;font-size:12px;line-height:14px;height:14px;transform:scaleX(0.917);transform-origin:right top;">Delivery AM/PM</div>
<div class="t" style="left:-4px;top:208px;width:200px;text-align:right;font-size:12px;line-height:14px;height:14px;transform:scaleX(0.9);transform-origin:right top;">7450</div>
<div class="t" style="left:36px;top:208px;width:200px;text-align:right;font-size:12px;line-height:14px;height:14px;transform:scaleX(0.9);transform-origin:right top;">8007</div>
<div class="t" style="left:76px;top:208px;width:200px;text-align:right;font-size:12px;line-height:14px;height:14px;transform:scaleX(0.9);transform-origin:right top;">5475</div>
<div class="t" style="left:116px;top:208px;width:200px;text-align:right;font-size:12px;line-height:14px;height:14px;transform:scaleX(0.9);transform-origin:right top;">5568</div>
<div class="t" style="left:156px;top:208px;width:200px;text-align:right;font-size:12px;line-height:14px;height:14px;transform:scaleX(0.9);transform-origin:right top;">4350</div>
<div class="t" style="left:196px;top:208px;width:200px;text-align:right;font-size:12px;line-height:14px;height:14px;transform:scaleX(0.9);transform-origin:right top;">4257</div>
<div class="t" style="left:236px;top:208px;width:200px;text-align:right;font-size:12px;line-height:14px;height:14px;transform:scaleX(0.9);transform-origin:right top;">0</div>
<div class="t" style="left:276px;top:208px;width:200px;text-align:right;font-size:12px;line-height:14px;height:14px;transform:scaleX(0.9);transform-origin:right top;">0</div>
<div class="t" style="left:316px;top:208px;width:200px;text-align:right;font-size:12px;line-height:14px;height:14px;transform:scaleX(0.9);transform-origin:right top;">0</div>
<div class="t" style="left:356px;top:208px;width:200px;text-align:right;font-size:12px;line-height:14px;height:14px;transform:scaleX(0.9);transform-origin:right top;">0</div>
<div class="t" style="left:396px;top:208px;width:200px;text-align:right;font-size:12px;line-height:14px;height:14px;transform:scaleX(0.9);transform-origin:right top;">0</div>
<div class="t" style="left:436px;top:208px;width:200px;text-align:right;font-size:12px;line-height:14px;height:14px;transform:scaleX(0.9);transform-origin:right top;">0</div>
<div style="left:31px;top:223px;width:608px;height:1px;background:#aca899;"></div>
<div style="left:32px;top:224px;width:607px;height:1px;background:#ffffff;"></div>
<div style="left:33px;top:225px;width:1px;height:59px;background:#000;"></div>
<div style="left:34px;top:225px;width:605px;height:1px;background:#aca899;"></div>
<div style="left:34px;top:226px;width:605px;height:16px;background:#ece9d8;"></div>
<div style="left:35px;top:226px;width:604px;height:1px;background:#ffffff;"></div>
<div style="left:35px;top:226px;width:1px;height:16px;background:#ffffff;"></div>
<div style="left:129px;top:228px;width:1px;height:13px;background:#aca899;"></div>
<div style="left:130px;top:228px;width:1px;height:13px;background:#ffffff;"></div>
<div style="left:237px;top:228px;width:1px;height:13px;background:#aca899;"></div>
<div style="left:238px;top:228px;width:1px;height:13px;background:#ffffff;"></div>
<div style="left:317px;top:228px;width:1px;height:13px;background:#aca899;"></div>
<div style="left:318px;top:228px;width:1px;height:13px;background:#ffffff;"></div>
<div style="left:397px;top:228px;width:1px;height:13px;background:#aca899;"></div>
<div style="left:398px;top:228px;width:1px;height:13px;background:#ffffff;"></div>
<div style="left:477px;top:228px;width:1px;height:13px;background:#aca899;"></div>
<div style="left:478px;top:228px;width:1px;height:13px;background:#ffffff;"></div>
<div style="left:557px;top:228px;width:1px;height:13px;background:#aca899;"></div>
<div style="left:558px;top:228px;width:1px;height:13px;background:#ffffff;"></div>
<div style="left:34px;top:242px;width:605px;height:1px;background:#aca899;"></div>
<div class="t" style="left:41px;top:228px;font-size:12px;line-height:14px;height:14px;transform:scaleX(0.917);transform-origin:left top;">Delivery Total</div>
<div class="t" style="left:152px;top:228px;width:100px;text-align:center;font-size:12px;line-height:14px;height:14px;transform:scaleX(0.917);transform-origin:center top;">G87</div>
<div class="t" style="left:231.5px;top:228px;width:100.0px;text-align:center;font-size:12px;line-height:14px;height:14px;transform:scaleX(0.917);transform-origin:center top;">G90</div>
<div class="t" style="left:307.5px;top:228px;width:100.0px;text-align:center;font-size:12px;line-height:14px;height:14px;transform:scaleX(0.917);transform-origin:center top;">D1UC</div>
<div class="t" style="left:392.5px;top:228px;width:100.0px;text-align:center;font-size:12px;line-height:14px;height:14px;transform:scaleX(0.917);transform-origin:center top;">UNKNOWN</div>
<div class="t" style="left:472.5px;top:228px;width:100.0px;text-align:center;font-size:12px;line-height:14px;height:14px;transform:scaleX(0.917);transform-origin:center top;">UNKNOWN</div>
<div class="t" style="left:555.5px;top:228px;width:100.0px;text-align:center;font-size:12px;line-height:14px;height:14px;transform:scaleX(0.917);transform-origin:center top;">UNKNOWN</div>
<div style="left:34px;top:243px;width:95px;height:17px;background:#316ac5;"></div>
<div style="left:130px;top:243px;width:509px;height:17px;background:#ffffff;"></div>
<div style="left:129px;top:243px;width:1px;height:17px;background:#aca899;"></div>
<div style="left:237px;top:243px;width:1px;height:17px;background:#aca899;"></div>
<div style="left:317px;top:243px;width:1px;height:17px;background:#aca899;"></div>
<div style="left:397px;top:243px;width:1px;height:17px;background:#aca899;"></div>
<div style="left:477px;top:243px;width:1px;height:17px;background:#aca899;"></div>
<div style="left:557px;top:243px;width:1px;height:17px;background:#aca899;"></div>
<div style="left:34px;top:260px;width:605px;height:1px;background:#aca899;"></div>
<div class="t" style="left:-75px;top:245px;width:200px;text-align:right;color:#fff;font-size:12px;line-height:14px;height:14px;transform:scaleX(0.9);transform-origin:right top;">0</div>
<div class="t" style="left:33px;top:245px;width:200px;text-align:right;font-size:12px;line-height:14px;height:14px;transform:scaleX(0.9);transform-origin:right top;">0</div>
<div class="t" style="left:113px;top:245px;width:200px;text-align:right;font-size:12px;line-height:14px;height:14px;transform:scaleX(0.9);transform-origin:right top;">0</div>
<div class="t" style="left:193px;top:245px;width:200px;text-align:right;font-size:12px;line-height:14px;height:14px;transform:scaleX(0.9);transform-origin:right top;">0</div>
<div class="t" style="left:273px;top:245px;width:200px;text-align:right;font-size:12px;line-height:14px;height:14px;transform:scaleX(0.9);transform-origin:right top;">0</div>
<div class="t" style="left:353px;top:245px;width:200px;text-align:right;font-size:12px;line-height:14px;height:14px;transform:scaleX(0.9);transform-origin:right top;">0</div>
<div class="t" style="left:433px;top:245px;width:200px;text-align:right;font-size:12px;line-height:14px;height:14px;transform:scaleX(0.9);transform-origin:right top;">0</div>
<div style="left:34px;top:261px;width:605px;height:22px;background:#808080;"></div>
<div style="left:33px;top:283px;width:606px;height:1px;background:#000;"></div>
<div style="left:33px;top:284px;width:606px;height:1px;background:#f1efe2;"></div>
<div style="left:29px;top:287px;width:610px;height:1px;background:#aca899;"></div>
<div style="left:30px;top:288px;width:609px;height:1px;background:#ffffff;"></div>
<div style="left:31px;top:289px;width:608px;height:1px;background:#aca899;"></div>
<div style="left:32px;top:290px;width:607px;height:1px;background:#ffffff;"></div>
<div style="left:317px;top:289px;width:1px;height:17px;background:#aca899;"></div>
<div style="left:318px;top:290px;width:1px;height:16px;background:#ffffff;"></div>
<div style="left:357px;top:289px;width:1px;height:17px;background:#aca899;"></div>
<div style="left:358px;top:290px;width:1px;height:16px;background:#ffffff;"></div>
<div style="left:397px;top:289px;width:1px;height:17px;background:#aca899;"></div>
<div style="left:398px;top:290px;width:1px;height:16px;background:#ffffff;"></div>
<div style="left:437px;top:289px;width:1px;height:17px;background:#aca899;"></div>
<div style="left:438px;top:290px;width:1px;height:16px;background:#ffffff;"></div>
<div style="left:477px;top:289px;width:1px;height:17px;background:#aca899;"></div>
<div style="left:478px;top:290px;width:1px;height:16px;background:#ffffff;"></div>
<div style="left:517px;top:289px;width:1px;height:17px;background:#aca899;"></div>
<div style="left:518px;top:290px;width:1px;height:16px;background:#ffffff;"></div>
<div style="left:557px;top:289px;width:1px;height:17px;background:#aca899;"></div>
<div style="left:558px;top:290px;width:1px;height:16px;background:#ffffff;"></div>
<div style="left:597px;top:289px;width:1px;height:17px;background:#aca899;"></div>
<div style="left:598px;top:290px;width:1px;height:16px;background:#ffffff;"></div>
<div style="left:31px;top:289px;width:1px;height:103px;background:#aca899;"></div>
<div style="left:32px;top:290px;width:1px;height:102px;background:#ffffff;"></div>
<div style="left:128px;top:290px;width:1px;height:1px;background:#aca899;"></div>
<div style="left:128px;top:304px;width:1px;height:2px;background:#aca899;"></div>
<div style="left:129px;top:304px;width:1px;height:2px;background:#ffffff;"></div>
<div style="left:197px;top:290px;width:1px;height:1px;background:#aca899;"></div>
<div style="left:197px;top:304px;width:1px;height:2px;background:#aca899;"></div>
<div style="left:198px;top:304px;width:1px;height:2px;background:#ffffff;"></div>
<div style="left:237px;top:290px;width:1px;height:1px;background:#aca899;"></div>
<div style="left:237px;top:304px;width:1px;height:2px;background:#aca899;"></div>
<div style="left:238px;top:304px;width:1px;height:2px;background:#ffffff;"></div>
<div style="left:277px;top:290px;width:1px;height:1px;background:#aca899;"></div>
<div style="left:277px;top:304px;width:1px;height:2px;background:#aca899;"></div>
<div style="left:278px;top:304px;width:1px;height:2px;background:#ffffff;"></div>
<div class="t" style="left:34px;top:291px;font-weight:bold;font-size:12px;line-height:14px;height:14px;transform:scaleX(1.047);transform-origin:left top;">Friday, August 01, 2008 (8/1/2008)</div>
<div style="left:31px;top:306px;width:608px;height:1px;background:#aca899;"></div>
<div style="left:32px;top:307px;width:607px;height:1px;background:#ffffff;"></div>
<div style="left:128px;top:306px;width:1px;height:17px;background:#aca899;"></div>
<div style="left:129px;top:307px;width:1px;height:16px;background:#ffffff;"></div>
<div style="left:197px;top:306px;width:1px;height:17px;background:#aca899;"></div>
<div style="left:198px;top:307px;width:1px;height:16px;background:#ffffff;"></div>
<div style="left:237px;top:306px;width:1px;height:17px;background:#aca899;"></div>
<div style="left:238px;top:307px;width:1px;height:16px;background:#ffffff;"></div>
<div style="left:277px;top:306px;width:1px;height:17px;background:#aca899;"></div>
<div style="left:278px;top:307px;width:1px;height:16px;background:#ffffff;"></div>
<div style="left:317px;top:306px;width:1px;height:17px;background:#aca899;"></div>
<div style="left:318px;top:307px;width:1px;height:16px;background:#ffffff;"></div>
<div style="left:357px;top:306px;width:1px;height:17px;background:#aca899;"></div>
<div style="left:358px;top:307px;width:1px;height:16px;background:#ffffff;"></div>
<div style="left:397px;top:306px;width:1px;height:17px;background:#aca899;"></div>
<div style="left:398px;top:307px;width:1px;height:16px;background:#ffffff;"></div>
<div style="left:437px;top:306px;width:1px;height:17px;background:#aca899;"></div>
<div style="left:438px;top:307px;width:1px;height:16px;background:#ffffff;"></div>
<div style="left:477px;top:306px;width:1px;height:17px;background:#aca899;"></div>
<div style="left:478px;top:307px;width:1px;height:16px;background:#ffffff;"></div>
<div style="left:517px;top:306px;width:1px;height:17px;background:#aca899;"></div>
<div style="left:518px;top:307px;width:1px;height:16px;background:#ffffff;"></div>
<div style="left:557px;top:306px;width:1px;height:17px;background:#aca899;"></div>
<div style="left:558px;top:307px;width:1px;height:16px;background:#ffffff;"></div>
<div style="left:597px;top:306px;width:1px;height:17px;background:#aca899;"></div>
<div style="left:598px;top:307px;width:1px;height:16px;background:#ffffff;"></div>
<div class="t" style="left:-77px;top:308px;width:200px;text-align:right;font-size:12px;line-height:14px;height:14px;transform:scaleX(0.917);transform-origin:right top;">Same day/7 day</div>
<div class="t" style="left:-4px;top:308px;width:200px;text-align:right;font-size:12px;line-height:14px;height:14px;transform:scaleX(0.9);transform-origin:right top;">0</div>
<div class="t" style="left:36px;top:308px;width:200px;text-align:right;font-size:12px;line-height:14px;height:14px;transform:scaleX(0.9);transform-origin:right top;">857</div>
<div class="t" style="left:76px;top:308px;width:200px;text-align:right;font-size:12px;line-height:14px;height:14px;transform:scaleX(0.9);transform-origin:right top;">0</div>
<div class="t" style="left:116px;top:308px;width:200px;text-align:right;font-size:12px;line-height:14px;height:14px;transform:scaleX(0.9);transform-origin:right top;">143</div>
<div class="t" style="left:156px;top:308px;width:200px;text-align:right;font-size:12px;line-height:14px;height:14px;transform:scaleX(0.9);transform-origin:right top;">0</div>
<div class="t" style="left:196px;top:308px;width:200px;text-align:right;font-size:12px;line-height:14px;height:14px;transform:scaleX(0.9);transform-origin:right top;">-143</div>
<div class="t" style="left:236px;top:308px;width:200px;text-align:right;font-size:12px;line-height:14px;height:14px;transform:scaleX(0.9);transform-origin:right top;">0</div>
<div class="t" style="left:276px;top:308px;width:200px;text-align:right;font-size:12px;line-height:14px;height:14px;transform:scaleX(0.9);transform-origin:right top;">0</div>
<div class="t" style="left:316px;top:308px;width:200px;text-align:right;font-size:12px;line-height:14px;height:14px;transform:scaleX(0.9);transform-origin:right top;">0</div>
<div class="t" style="left:356px;top:308px;width:200px;text-align:right;font-size:12px;line-height:14px;height:14px;transform:scaleX(0.9);transform-origin:right top;">0</div>
<div class="t" style="left:396px;top:308px;width:200px;text-align:right;font-size:12px;line-height:14px;height:14px;transform:scaleX(0.9);transform-origin:right top;">0</div>
<div class="t" style="left:436px;top:308px;width:200px;text-align:right;font-size:12px;line-height:14px;height:14px;transform:scaleX(0.9);transform-origin:right top;">0</div>
<div style="left:31px;top:323px;width:608px;height:1px;background:#aca899;"></div>
<div style="left:32px;top:324px;width:607px;height:1px;background:#ffffff;"></div>
<div style="left:128px;top:323px;width:1px;height:17px;background:#aca899;"></div>
<div style="left:129px;top:324px;width:1px;height:16px;background:#ffffff;"></div>
<div style="left:197px;top:323px;width:1px;height:17px;background:#aca899;"></div>
<div style="left:198px;top:324px;width:1px;height:16px;background:#ffffff;"></div>
<div style="left:237px;top:323px;width:1px;height:17px;background:#aca899;"></div>
<div style="left:238px;top:324px;width:1px;height:16px;background:#ffffff;"></div>
<div style="left:277px;top:323px;width:1px;height:17px;background:#aca899;"></div>
<div style="left:278px;top:324px;width:1px;height:16px;background:#ffffff;"></div>
<div style="left:317px;top:323px;width:1px;height:17px;background:#aca899;"></div>
<div style="left:318px;top:324px;width:1px;height:16px;background:#ffffff;"></div>
<div style="left:357px;top:323px;width:1px;height:17px;background:#aca899;"></div>
<div style="left:358px;top:324px;width:1px;height:16px;background:#ffffff;"></div>
<div style="left:397px;top:323px;width:1px;height:17px;background:#aca899;"></div>
<div style="left:398px;top:324px;width:1px;height:16px;background:#ffffff;"></div>
<div style="left:437px;top:323px;width:1px;height:17px;background:#aca899;"></div>
<div style="left:438px;top:324px;width:1px;height:16px;background:#ffffff;"></div>
<div style="left:477px;top:323px;width:1px;height:17px;background:#aca899;"></div>
<div style="left:478px;top:324px;width:1px;height:16px;background:#ffffff;"></div>
<div style="left:517px;top:323px;width:1px;height:17px;background:#aca899;"></div>
<div style="left:518px;top:324px;width:1px;height:16px;background:#ffffff;"></div>
<div style="left:557px;top:323px;width:1px;height:17px;background:#aca899;"></div>
<div style="left:558px;top:324px;width:1px;height:16px;background:#ffffff;"></div>
<div style="left:597px;top:323px;width:1px;height:17px;background:#aca899;"></div>
<div style="left:598px;top:324px;width:1px;height:16px;background:#ffffff;"></div>
<div class="t" style="left:-77px;top:325px;width:200px;text-align:right;font-size:12px;line-height:14px;height:14px;transform:scaleX(0.917);transform-origin:right top;">Gallons(Act/Est)</div>
<div style="left:131px;top:326px;width:22px;height:11px;border:1px solid #003c74;border-radius:3px;background:linear-gradient(#fff,#f0efe8 75%,#d9d3c8)"></div>
<div class="t" style="left:134px;top:325px;">...</div>
<div style="left:159px;top:325px;width:38px;height:13px;background:#ffffff;"></div>
<div style="left:238px;top:324px;width:39px;height:14px;background:#ffffff;"></div>
<div style="left:318px;top:324px;width:39px;height:14px;background:#ffffff;"></div>
<div style="left:398px;top:324px;width:39px;height:14px;background:#ffffff;"></div>
<div style="left:478px;top:324px;width:39px;height:14px;background:#ffffff;"></div>
<div style="left:558px;top:324px;width:39px;height:14px;background:#ffffff;"></div>
<div class="t" style="left:-4px;top:325px;width:200px;text-align:right;font-size:12px;line-height:14px;height:14px;transform:scaleX(0.9);transform-origin:right top;">0</div>
<div class="t" style="left:36px;top:325px;width:200px;text-align:right;font-size:12px;line-height:14px;height:14px;transform:scaleX(0.9);transform-origin:right top;">2143</div>
<div class="t" style="left:76px;top:325px;width:200px;text-align:right;font-size:12px;line-height:14px;height:14px;transform:scaleX(0.9);transform-origin:right top;">0</div>
<div class="t" style="left:116px;top:325px;width:200px;text-align:right;font-size:12px;line-height:14px;height:14px;transform:scaleX(0.9);transform-origin:right top;">4357</div>
<div class="t" style="left:156px;top:325px;width:200px;text-align:right;font-size:12px;line-height:14px;height:14px;transform:scaleX(0.9);transform-origin:right top;">0</div>
<div class="t" style="left:196px;top:325px;width:200px;text-align:right;font-size:12px;line-height:14px;height:14px;transform:scaleX(0.9);transform-origin:right top;">3893</div>
<div class="t" style="left:236px;top:325px;width:200px;text-align:right;font-size:12px;line-height:14px;height:14px;transform:scaleX(0.9);transform-origin:right top;">0</div>
<div class="t" style="left:276px;top:325px;width:200px;text-align:right;font-size:12px;line-height:14px;height:14px;transform:scaleX(0.9);transform-origin:right top;">0</div>
<div class="t" style="left:316px;top:325px;width:200px;text-align:right;font-size:12px;line-height:14px;height:14px;transform:scaleX(0.9);transform-origin:right top;">0</div>
<div class="t" style="left:356px;top:325px;width:200px;text-align:right;font-size:12px;line-height:14px;height:14px;transform:scaleX(0.9);transform-origin:right top;">0</div>
<div class="t" style="left:396px;top:325px;width:200px;text-align:right;font-size:12px;line-height:14px;height:14px;transform:scaleX(0.9);transform-origin:right top;">0</div>
<div class="t" style="left:436px;top:325px;width:200px;text-align:right;font-size:12px;line-height:14px;height:14px;transform:scaleX(0.9);transform-origin:right top;">0</div>
<div style="left:31px;top:340px;width:608px;height:1px;background:#aca899;"></div>
<div style="left:32px;top:341px;width:607px;height:1px;background:#ffffff;"></div>
<div style="left:128px;top:340px;width:1px;height:17px;background:#aca899;"></div>
<div style="left:129px;top:341px;width:1px;height:16px;background:#ffffff;"></div>
<div style="left:237px;top:340px;width:1px;height:17px;background:#aca899;"></div>
<div style="left:238px;top:341px;width:1px;height:16px;background:#ffffff;"></div>
<div style="left:317px;top:340px;width:1px;height:17px;background:#aca899;"></div>
<div style="left:318px;top:341px;width:1px;height:16px;background:#ffffff;"></div>
<div style="left:397px;top:340px;width:1px;height:17px;background:#aca899;"></div>
<div style="left:398px;top:341px;width:1px;height:16px;background:#ffffff;"></div>
<div style="left:477px;top:340px;width:1px;height:17px;background:#aca899;"></div>
<div style="left:478px;top:341px;width:1px;height:16px;background:#ffffff;"></div>
<div style="left:557px;top:340px;width:1px;height:17px;background:#aca899;"></div>
<div style="left:558px;top:341px;width:1px;height:16px;background:#ffffff;"></div>
<div style="left:197px;top:341px;width:1px;height:1px;background:#aca899;"></div>
<div style="left:197px;top:355px;width:1px;height:2px;background:#aca899;"></div>
<div style="left:198px;top:355px;width:1px;height:2px;background:#ffffff;"></div>
<div style="left:277px;top:341px;width:1px;height:1px;background:#aca899;"></div>
<div style="left:277px;top:355px;width:1px;height:2px;background:#aca899;"></div>
<div style="left:278px;top:355px;width:1px;height:2px;background:#ffffff;"></div>
<div style="left:357px;top:341px;width:1px;height:1px;background:#aca899;"></div>
<div style="left:357px;top:355px;width:1px;height:2px;background:#aca899;"></div>
<div style="left:358px;top:355px;width:1px;height:2px;background:#ffffff;"></div>
<div style="left:437px;top:341px;width:1px;height:1px;background:#aca899;"></div>
<div style="left:437px;top:355px;width:1px;height:2px;background:#aca899;"></div>
<div style="left:438px;top:355px;width:1px;height:2px;background:#ffffff;"></div>
<div style="left:517px;top:341px;width:1px;height:1px;background:#aca899;"></div>
<div style="left:517px;top:355px;width:1px;height:2px;background:#aca899;"></div>
<div style="left:518px;top:355px;width:1px;height:2px;background:#ffffff;"></div>
<div style="left:597px;top:341px;width:1px;height:1px;background:#aca899;"></div>
<div style="left:597px;top:355px;width:1px;height:2px;background:#aca899;"></div>
<div style="left:598px;top:355px;width:1px;height:2px;background:#ffffff;"></div>
<div class="t" style="left:-77px;top:342px;width:200px;text-align:right;font-size:12px;line-height:14px;height:14px;transform:scaleX(0.917);transform-origin:right top;">Sales</div>
<div class="t" style="left:36px;top:342px;width:200px;text-align:right;font-size:12px;line-height:14px;height:14px;transform:scaleX(0.9);transform-origin:right top;">857</div>
<div class="t" style="left:116px;top:342px;width:200px;text-align:right;font-size:12px;line-height:14px;height:14px;transform:scaleX(0.9);transform-origin:right top;">143</div>
<div class="t" style="left:196px;top:342px;width:200px;text-align:right;font-size:12px;line-height:14px;height:14px;transform:scaleX(0.9);transform-origin:right top;">-143</div>
<div class="t" style="left:276px;top:342px;width:200px;text-align:right;font-size:12px;line-height:14px;height:14px;transform:scaleX(0.9);transform-origin:right top;">0</div>
<div class="t" style="left:356px;top:342px;width:200px;text-align:right;font-size:12px;line-height:14px;height:14px;transform:scaleX(0.9);transform-origin:right top;">0</div>
<div class="t" style="left:438px;top:342px;width:200px;text-align:right;font-size:12px;line-height:14px;height:14px;transform:scaleX(0.9);transform-origin:right top;">0</div>
<div style="left:31px;top:357px;width:608px;height:1px;background:#aca899;"></div>
<div style="left:32px;top:358px;width:607px;height:1px;background:#ffffff;"></div>
<div style="left:128px;top:357px;width:1px;height:17px;background:#aca899;"></div>
<div style="left:129px;top:358px;width:1px;height:16px;background:#ffffff;"></div>
<div style="left:237px;top:357px;width:1px;height:17px;background:#aca899;"></div>
<div style="left:238px;top:358px;width:1px;height:16px;background:#ffffff;"></div>
<div style="left:317px;top:357px;width:1px;height:17px;background:#aca899;"></div>
<div style="left:318px;top:358px;width:1px;height:16px;background:#ffffff;"></div>
<div style="left:397px;top:357px;width:1px;height:17px;background:#aca899;"></div>
<div style="left:398px;top:358px;width:1px;height:16px;background:#ffffff;"></div>
<div style="left:477px;top:357px;width:1px;height:17px;background:#aca899;"></div>
<div style="left:478px;top:358px;width:1px;height:16px;background:#ffffff;"></div>
<div style="left:557px;top:357px;width:1px;height:17px;background:#aca899;"></div>
<div style="left:558px;top:358px;width:1px;height:16px;background:#ffffff;"></div>
<div style="left:197px;top:358px;width:1px;height:1px;background:#aca899;"></div>
<div style="left:197px;top:372px;width:1px;height:2px;background:#aca899;"></div>
<div style="left:198px;top:372px;width:1px;height:2px;background:#ffffff;"></div>
<div style="left:277px;top:358px;width:1px;height:1px;background:#aca899;"></div>
<div style="left:277px;top:372px;width:1px;height:2px;background:#aca899;"></div>
<div style="left:278px;top:372px;width:1px;height:2px;background:#ffffff;"></div>
<div style="left:357px;top:358px;width:1px;height:1px;background:#aca899;"></div>
<div style="left:357px;top:372px;width:1px;height:2px;background:#aca899;"></div>
<div style="left:358px;top:372px;width:1px;height:2px;background:#ffffff;"></div>
<div style="left:437px;top:358px;width:1px;height:1px;background:#aca899;"></div>
<div style="left:437px;top:372px;width:1px;height:2px;background:#aca899;"></div>
<div style="left:438px;top:372px;width:1px;height:2px;background:#ffffff;"></div>
<div style="left:517px;top:358px;width:1px;height:1px;background:#aca899;"></div>
<div style="left:517px;top:372px;width:1px;height:2px;background:#aca899;"></div>
<div style="left:518px;top:372px;width:1px;height:2px;background:#ffffff;"></div>
<div style="left:597px;top:358px;width:1px;height:1px;background:#aca899;"></div>
<div style="left:597px;top:372px;width:1px;height:2px;background:#aca899;"></div>
<div style="left:598px;top:372px;width:1px;height:2px;background:#ffffff;"></div>
<div class="t" style="left:-77px;top:359px;width:200px;text-align:right;font-size:12px;line-height:14px;height:14px;transform:scaleX(0.917);transform-origin:right top;">Day In Gnd</div>
<div class="t" style="left:36px;top:359px;width:200px;text-align:right;font-size:12px;line-height:14px;height:14px;transform:scaleX(0.9);transform-origin:right top;">1.3</div>
<div class="t" style="left:116px;top:359px;width:200px;text-align:right;font-size:12px;line-height:14px;height:14px;transform:scaleX(0.9);transform-origin:right top;">23.5</div>
<div class="t" style="left:196px;top:359px;width:200px;text-align:right;font-size:12px;line-height:14px;height:14px;transform:scaleX(0.9);transform-origin:right top;">-21.6</div>
<div class="t" style="left:276px;top:359px;width:200px;text-align:right;font-size:12px;line-height:14px;height:14px;transform:scaleX(0.9);transform-origin:right top;">0.0</div>
<div class="t" style="left:356px;top:359px;width:200px;text-align:right;font-size:12px;line-height:14px;height:14px;transform:scaleX(0.9);transform-origin:right top;">0.0</div>
<div class="t" style="left:438px;top:359px;width:200px;text-align:right;font-size:12px;line-height:14px;height:14px;transform:scaleX(0.9);transform-origin:right top;">0.0</div>
<div style="left:31px;top:374px;width:608px;height:1px;background:#aca899;"></div>
<div style="left:32px;top:375px;width:607px;height:1px;background:#ffffff;"></div>
<div style="left:128px;top:374px;width:1px;height:17px;background:#aca899;"></div>
<div style="left:129px;top:375px;width:1px;height:16px;background:#ffffff;"></div>
<div style="left:197px;top:374px;width:1px;height:17px;background:#aca899;"></div>
<div style="left:198px;top:375px;width:1px;height:16px;background:#ffffff;"></div>
<div style="left:237px;top:374px;width:1px;height:17px;background:#aca899;"></div>
<div style="left:238px;top:375px;width:1px;height:16px;background:#ffffff;"></div>
<div style="left:277px;top:374px;width:1px;height:17px;background:#aca899;"></div>
<div style="left:278px;top:375px;width:1px;height:16px;background:#ffffff;"></div>
<div style="left:317px;top:374px;width:1px;height:17px;background:#aca899;"></div>
<div style="left:318px;top:375px;width:1px;height:16px;background:#ffffff;"></div>
<div style="left:357px;top:374px;width:1px;height:17px;background:#aca899;"></div>
<div style="left:358px;top:375px;width:1px;height:16px;background:#ffffff;"></div>
<div style="left:397px;top:374px;width:1px;height:17px;background:#aca899;"></div>
<div style="left:398px;top:375px;width:1px;height:16px;background:#ffffff;"></div>
<div style="left:437px;top:374px;width:1px;height:17px;background:#aca899;"></div>
<div style="left:438px;top:375px;width:1px;height:16px;background:#ffffff;"></div>
<div style="left:477px;top:374px;width:1px;height:17px;background:#aca899;"></div>
<div style="left:478px;top:375px;width:1px;height:16px;background:#ffffff;"></div>
<div style="left:517px;top:374px;width:1px;height:17px;background:#aca899;"></div>
<div style="left:518px;top:375px;width:1px;height:16px;background:#ffffff;"></div>
<div style="left:557px;top:374px;width:1px;height:17px;background:#aca899;"></div>
<div style="left:558px;top:375px;width:1px;height:16px;background:#ffffff;"></div>
<div style="left:597px;top:374px;width:1px;height:17px;background:#aca899;"></div>
<div style="left:598px;top:375px;width:1px;height:16px;background:#ffffff;"></div>
<div class="t" style="left:-77px;top:376px;width:200px;text-align:right;font-size:12px;line-height:14px;height:14px;transform:scaleX(0.917);transform-origin:right top;">Delivery AM/PM</div>
<div class="t" style="left:-4px;top:376px;width:200px;text-align:right;font-size:12px;line-height:14px;height:14px;transform:scaleX(0.9);transform-origin:right top;">8307</div>
<div class="t" style="left:36px;top:376px;width:200px;text-align:right;font-size:12px;line-height:14px;height:14px;transform:scaleX(0.9);transform-origin:right top;">9514</div>
<div class="t" style="left:76px;top:376px;width:200px;text-align:right;font-size:12px;line-height:14px;height:14px;transform:scaleX(0.9);transform-origin:right top;">5618</div>
<div class="t" style="left:116px;top:376px;width:200px;text-align:right;font-size:12px;line-height:14px;height:14px;transform:scaleX(0.9);transform-origin:right top;">5943</div>
<div class="t" style="left:156px;top:376px;width:200px;text-align:right;font-size:12px;line-height:14px;height:14px;transform:scaleX(0.9);transform-origin:right top;">4207</div>
<div class="t" style="left:196px;top:376px;width:200px;text-align:right;font-size:12px;line-height:14px;height:14px;transform:scaleX(0.9);transform-origin:right top;">4416</div>
<div class="t" style="left:236px;top:376px;width:200px;text-align:right;font-size:12px;line-height:14px;height:14px;transform:scaleX(0.9);transform-origin:right top;">0</div>
<div class="t" style="left:276px;top:376px;width:200px;text-align:right;font-size:12px;line-height:14px;height:14px;transform:scaleX(0.9);transform-origin:right top;">0</div>
<div class="t" style="left:316px;top:376px;width:200px;text-align:right;font-size:12px;line-height:14px;height:14px;transform:scaleX(0.9);transform-origin:right top;">0</div>
<div class="t" style="left:356px;top:376px;width:200px;text-align:right;font-size:12px;line-height:14px;height:14px;transform:scaleX(0.9);transform-origin:right top;">0</div>
<div class="t" style="left:396px;top:376px;width:200px;text-align:right;font-size:12px;line-height:14px;height:14px;transform:scaleX(0.9);transform-origin:right top;">0</div>
<div class="t" style="left:436px;top:376px;width:200px;text-align:right;font-size:12px;line-height:14px;height:14px;transform:scaleX(0.9);transform-origin:right top;">0</div>
<div style="left:31px;top:391px;width:608px;height:1px;background:#aca899;"></div>
<div style="left:32px;top:392px;width:607px;height:1px;background:#ffffff;"></div>
<div style="left:33px;top:393px;width:1px;height:59px;background:#000;"></div>
<div style="left:34px;top:393px;width:605px;height:1px;background:#aca899;"></div>
<div style="left:34px;top:394px;width:605px;height:16px;background:#ece9d8;"></div>
<div style="left:35px;top:394px;width:604px;height:1px;background:#ffffff;"></div>
<div style="left:35px;top:394px;width:1px;height:16px;background:#ffffff;"></div>
<div style="left:129px;top:396px;width:1px;height:13px;background:#aca899;"></div>
<div style="left:130px;top:396px;width:1px;height:13px;background:#ffffff;"></div>
<div style="left:237px;top:396px;width:1px;height:13px;background:#aca899;"></div>
<div style="left:238px;top:396px;width:1px;height:13px;background:#ffffff;"></div>
<div style="left:317px;top:396px;width:1px;height:13px;background:#aca899;"></div>
<div style="left:318px;top:396px;width:1px;height:13px;background:#ffffff;"></div>
<div style="left:397px;top:396px;width:1px;height:13px;background:#aca899;"></div>
<div style="left:398px;top:396px;width:1px;height:13px;background:#ffffff;"></div>
<div style="left:477px;top:396px;width:1px;height:13px;background:#aca899;"></div>
<div style="left:478px;top:396px;width:1px;height:13px;background:#ffffff;"></div>
<div style="left:557px;top:396px;width:1px;height:13px;background:#aca899;"></div>
<div style="left:558px;top:396px;width:1px;height:13px;background:#ffffff;"></div>
<div style="left:34px;top:410px;width:605px;height:1px;background:#aca899;"></div>
<div class="t" style="left:41px;top:396px;font-size:12px;line-height:14px;height:14px;transform:scaleX(0.917);transform-origin:left top;">Delivery Total</div>
<div class="t" style="left:152px;top:396px;width:100px;text-align:center;font-size:12px;line-height:14px;height:14px;transform:scaleX(0.917);transform-origin:center top;">G87</div>
<div class="t" style="left:231.5px;top:396px;width:100.0px;text-align:center;font-size:12px;line-height:14px;height:14px;transform:scaleX(0.917);transform-origin:center top;">G90</div>
<div class="t" style="left:307.5px;top:396px;width:100.0px;text-align:center;font-size:12px;line-height:14px;height:14px;transform:scaleX(0.917);transform-origin:center top;">D1UC</div>
<div class="t" style="left:392.5px;top:396px;width:100.0px;text-align:center;font-size:12px;line-height:14px;height:14px;transform:scaleX(0.917);transform-origin:center top;">UNKNOWN</div>
<div class="t" style="left:472.5px;top:396px;width:100.0px;text-align:center;font-size:12px;line-height:14px;height:14px;transform:scaleX(0.917);transform-origin:center top;">UNKNOWN</div>
<div class="t" style="left:555.5px;top:396px;width:100.0px;text-align:center;font-size:12px;line-height:14px;height:14px;transform:scaleX(0.917);transform-origin:center top;">UNKNOWN</div>
<div style="left:34px;top:411px;width:95px;height:17px;background:#316ac5;"></div>
<div style="left:130px;top:411px;width:509px;height:17px;background:#ffffff;"></div>
<div style="left:129px;top:411px;width:1px;height:17px;background:#aca899;"></div>
<div style="left:237px;top:411px;width:1px;height:17px;background:#aca899;"></div>
<div style="left:317px;top:411px;width:1px;height:17px;background:#aca899;"></div>
<div style="left:397px;top:411px;width:1px;height:17px;background:#aca899;"></div>
<div style="left:477px;top:411px;width:1px;height:17px;background:#aca899;"></div>
<div style="left:557px;top:411px;width:1px;height:17px;background:#aca899;"></div>
<div style="left:34px;top:428px;width:605px;height:1px;background:#aca899;"></div>
<div class="t" style="left:-75px;top:413px;width:200px;text-align:right;color:#fff;font-size:12px;line-height:14px;height:14px;transform:scaleX(0.9);transform-origin:right top;">0</div>
<div class="t" style="left:33px;top:413px;width:200px;text-align:right;font-size:12px;line-height:14px;height:14px;transform:scaleX(0.9);transform-origin:right top;">0</div>
<div class="t" style="left:113px;top:413px;width:200px;text-align:right;font-size:12px;line-height:14px;height:14px;transform:scaleX(0.9);transform-origin:right top;">0</div>
<div class="t" style="left:193px;top:413px;width:200px;text-align:right;font-size:12px;line-height:14px;height:14px;transform:scaleX(0.9);transform-origin:right top;">0</div>
<div class="t" style="left:273px;top:413px;width:200px;text-align:right;font-size:12px;line-height:14px;height:14px;transform:scaleX(0.9);transform-origin:right top;">0</div>
<div class="t" style="left:353px;top:413px;width:200px;text-align:right;font-size:12px;line-height:14px;height:14px;transform:scaleX(0.9);transform-origin:right top;">0</div>
<div class="t" style="left:433px;top:413px;width:200px;text-align:right;font-size:12px;line-height:14px;height:14px;transform:scaleX(0.9);transform-origin:right top;">0</div>
<div style="left:34px;top:429px;width:605px;height:22px;background:#808080;"></div>
<div style="left:33px;top:451px;width:606px;height:1px;background:#000;"></div>
<div style="left:33px;top:452px;width:606px;height:1px;background:#f1efe2;"></div>
<div style="left:29px;top:455px;width:610px;height:1px;background:#aca899;"></div>
<div style="left:30px;top:456px;width:609px;height:1px;background:#ffffff;"></div>
<div style="left:31px;top:457px;width:608px;height:1px;background:#aca899;"></div>
<div style="left:32px;top:458px;width:607px;height:1px;background:#ffffff;"></div>
<div style="left:317px;top:457px;width:1px;height:17px;background:#aca899;"></div>
<div style="left:318px;top:458px;width:1px;height:16px;background:#ffffff;"></div>
<div style="left:357px;top:457px;width:1px;height:17px;background:#aca899;"></div>
<div style="left:358px;top:458px;width:1px;height:16px;background:#ffffff;"></div>
<div style="left:397px;top:457px;width:1px;height:17px;background:#aca899;"></div>
<div style="left:398px;top:458px;width:1px;height:16px;background:#ffffff;"></div>
<div style="left:437px;top:457px;width:1px;height:17px;background:#aca899;"></div>
<div style="left:438px;top:458px;width:1px;height:16px;background:#ffffff;"></div>
<div style="left:477px;top:457px;width:1px;height:17px;background:#aca899;"></div>
<div style="left:478px;top:458px;width:1px;height:16px;background:#ffffff;"></div>
<div style="left:517px;top:457px;width:1px;height:17px;background:#aca899;"></div>
<div style="left:518px;top:458px;width:1px;height:16px;background:#ffffff;"></div>
<div style="left:557px;top:457px;width:1px;height:17px;background:#aca899;"></div>
<div style="left:558px;top:458px;width:1px;height:16px;background:#ffffff;"></div>
<div style="left:597px;top:457px;width:1px;height:17px;background:#aca899;"></div>
<div style="left:598px;top:458px;width:1px;height:16px;background:#ffffff;"></div>
<div style="left:31px;top:457px;width:1px;height:103px;background:#aca899;"></div>
<div style="left:32px;top:458px;width:1px;height:102px;background:#ffffff;"></div>
<div style="left:128px;top:458px;width:1px;height:1px;background:#aca899;"></div>
<div style="left:128px;top:472px;width:1px;height:2px;background:#aca899;"></div>
<div style="left:129px;top:472px;width:1px;height:2px;background:#ffffff;"></div>
<div style="left:197px;top:458px;width:1px;height:1px;background:#aca899;"></div>
<div style="left:197px;top:472px;width:1px;height:2px;background:#aca899;"></div>
<div style="left:198px;top:472px;width:1px;height:2px;background:#ffffff;"></div>
<div style="left:237px;top:458px;width:1px;height:1px;background:#aca899;"></div>
<div style="left:237px;top:472px;width:1px;height:2px;background:#aca899;"></div>
<div style="left:238px;top:472px;width:1px;height:2px;background:#ffffff;"></div>
<div style="left:277px;top:458px;width:1px;height:1px;background:#aca899;"></div>
<div style="left:277px;top:472px;width:1px;height:2px;background:#aca899;"></div>
<div style="left:278px;top:472px;width:1px;height:2px;background:#ffffff;"></div>
<div class="t" style="left:34px;top:459px;font-weight:bold;font-size:12px;line-height:14px;height:14px;transform:scaleX(1.047);transform-origin:left top;">Saturday, August 02, 2008 (8/2/2008)</div>
<div style="left:31px;top:474px;width:608px;height:1px;background:#aca899;"></div>
<div style="left:32px;top:475px;width:607px;height:1px;background:#ffffff;"></div>
<div style="left:128px;top:474px;width:1px;height:17px;background:#aca899;"></div>
<div style="left:129px;top:475px;width:1px;height:16px;background:#ffffff;"></div>
<div style="left:197px;top:474px;width:1px;height:17px;background:#aca899;"></div>
<div style="left:198px;top:475px;width:1px;height:16px;background:#ffffff;"></div>
<div style="left:237px;top:474px;width:1px;height:17px;background:#aca899;"></div>
<div style="left:238px;top:475px;width:1px;height:16px;background:#ffffff;"></div>
<div style="left:277px;top:474px;width:1px;height:17px;background:#aca899;"></div>
<div style="left:278px;top:475px;width:1px;height:16px;background:#ffffff;"></div>
<div style="left:317px;top:474px;width:1px;height:17px;background:#aca899;"></div>
<div style="left:318px;top:475px;width:1px;height:16px;background:#ffffff;"></div>
<div style="left:357px;top:474px;width:1px;height:17px;background:#aca899;"></div>
<div style="left:358px;top:475px;width:1px;height:16px;background:#ffffff;"></div>
<div style="left:397px;top:474px;width:1px;height:17px;background:#aca899;"></div>
<div style="left:398px;top:475px;width:1px;height:16px;background:#ffffff;"></div>
<div style="left:437px;top:474px;width:1px;height:17px;background:#aca899;"></div>
<div style="left:438px;top:475px;width:1px;height:16px;background:#ffffff;"></div>
<div style="left:477px;top:474px;width:1px;height:17px;background:#aca899;"></div>
<div style="left:478px;top:475px;width:1px;height:16px;background:#ffffff;"></div>
<div style="left:517px;top:474px;width:1px;height:17px;background:#aca899;"></div>
<div style="left:518px;top:475px;width:1px;height:16px;background:#ffffff;"></div>
<div style="left:557px;top:474px;width:1px;height:17px;background:#aca899;"></div>
<div style="left:558px;top:475px;width:1px;height:16px;background:#ffffff;"></div>
<div style="left:597px;top:474px;width:1px;height:17px;background:#aca899;"></div>
<div style="left:598px;top:475px;width:1px;height:16px;background:#ffffff;"></div>
<div class="t" style="left:-77px;top:476px;width:200px;text-align:right;font-size:12px;line-height:14px;height:14px;transform:scaleX(0.917);transform-origin:right top;">Same day/7 day</div>
<div class="t" style="left:-4px;top:476px;width:200px;text-align:right;font-size:12px;line-height:14px;height:14px;transform:scaleX(0.9);transform-origin:right top;">0</div>
<div class="t" style="left:36px;top:476px;width:200px;text-align:right;font-size:12px;line-height:14px;height:14px;transform:scaleX(0.9);transform-origin:right top;">1857</div>
<div class="t" style="left:76px;top:476px;width:200px;text-align:right;font-size:12px;line-height:14px;height:14px;transform:scaleX(0.9);transform-origin:right top;">0</div>
<div class="t" style="left:116px;top:476px;width:200px;text-align:right;font-size:12px;line-height:14px;height:14px;transform:scaleX(0.9);transform-origin:right top;">500</div>
<div class="t" style="left:156px;top:476px;width:200px;text-align:right;font-size:12px;line-height:14px;height:14px;transform:scaleX(0.9);transform-origin:right top;">0</div>
<div class="t" style="left:196px;top:476px;width:200px;text-align:right;font-size:12px;line-height:14px;height:14px;transform:scaleX(0.9);transform-origin:right top;">321</div>
<div class="t" style="left:236px;top:476px;width:200px;text-align:right;font-size:12px;line-height:14px;height:14px;transform:scaleX(0.9);transform-origin:right top;">0</div>
<div class="t" style="left:276px;top:476px;width:200px;text-align:right;font-size:12px;line-height:14px;height:14px;transform:scaleX(0.9);transform-origin:right top;">0</div>
<div class="t" style="left:316px;top:476px;width:200px;text-align:right;font-size:12px;line-height:14px;height:14px;transform:scaleX(0.9);transform-origin:right top;">0</div>
<div class="t" style="left:356px;top:476px;width:200px;text-align:right;font-size:12px;line-height:14px;height:14px;transform:scaleX(0.9);transform-origin:right top;">0</div>
<div class="t" style="left:396px;top:476px;width:200px;text-align:right;font-size:12px;line-height:14px;height:14px;transform:scaleX(0.9);transform-origin:right top;">0</div>
<div class="t" style="left:436px;top:476px;width:200px;text-align:right;font-size:12px;line-height:14px;height:14px;transform:scaleX(0.9);transform-origin:right top;">0</div>
<div style="left:31px;top:491px;width:608px;height:1px;background:#aca899;"></div>
<div style="left:32px;top:492px;width:607px;height:1px;background:#ffffff;"></div>
<div style="left:128px;top:491px;width:1px;height:17px;background:#aca899;"></div>
<div style="left:129px;top:492px;width:1px;height:16px;background:#ffffff;"></div>
<div style="left:197px;top:491px;width:1px;height:17px;background:#aca899;"></div>
<div style="left:198px;top:492px;width:1px;height:16px;background:#ffffff;"></div>
<div style="left:237px;top:491px;width:1px;height:17px;background:#aca899;"></div>
<div style="left:238px;top:492px;width:1px;height:16px;background:#ffffff;"></div>
<div style="left:277px;top:491px;width:1px;height:17px;background:#aca899;"></div>
<div style="left:278px;top:492px;width:1px;height:16px;background:#ffffff;"></div>
<div style="left:317px;top:491px;width:1px;height:17px;background:#aca899;"></div>
<div style="left:318px;top:492px;width:1px;height:16px;background:#ffffff;"></div>
<div style="left:357px;top:491px;width:1px;height:17px;background:#aca899;"></div>
<div style="left:358px;top:492px;width:1px;height:16px;background:#ffffff;"></div>
<div style="left:397px;top:491px;width:1px;height:17px;background:#aca899;"></div>
<div style="left:398px;top:492px;width:1px;height:16px;background:#ffffff;"></div>
<div style="left:437px;top:491px;width:1px;height:17px;background:#aca899;"></div>
<div style="left:438px;top:492px;width:1px;height:16px;background:#ffffff;"></div>
<div style="left:477px;top:491px;width:1px;height:17px;background:#aca899;"></div>
<div style="left:478px;top:492px;width:1px;height:16px;background:#ffffff;"></div>
<div style="left:517px;top:491px;width:1px;height:17px;background:#aca899;"></div>
<div style="left:518px;top:492px;width:1px;height:16px;background:#ffffff;"></div>
<div style="left:557px;top:491px;width:1px;height:17px;background:#aca899;"></div>
<div style="left:558px;top:492px;width:1px;height:16px;background:#ffffff;"></div>
<div style="left:597px;top:491px;width:1px;height:17px;background:#aca899;"></div>
<div style="left:598px;top:492px;width:1px;height:16px;background:#ffffff;"></div>
<div class="t" style="left:-77px;top:493px;width:200px;text-align:right;font-size:12px;line-height:14px;height:14px;transform:scaleX(0.917);transform-origin:right top;">Gallons(Act/Est)</div>
<div style="left:131px;top:494px;width:22px;height:11px;border:1px solid #003c74;border-radius:3px;background:linear-gradient(#fff,#f0efe8 75%,#d9d3c8)"></div>
<div class="t" style="left:134px;top:493px;">...</div>
<div style="left:159px;top:493px;width:38px;height:13px;background:#ffffff;"></div>
<div style="left:238px;top:492px;width:39px;height:14px;background:#ffffff;"></div>
<div style="left:318px;top:492px;width:39px;height:14px;background:#ffffff;"></div>
<div style="left:398px;top:492px;width:39px;height:14px;background:#ffffff;"></div>
<div style="left:478px;top:492px;width:39px;height:14px;background:#ffffff;"></div>
<div style="left:558px;top:492px;width:39px;height:14px;background:#ffffff;"></div>
<div class="t" style="left:-4px;top:493px;width:200px;text-align:right;font-size:12px;line-height:14px;height:14px;transform:scaleX(0.9);transform-origin:right top;">0</div>
<div class="t" style="left:36px;top:493px;width:200px;text-align:right;font-size:12px;line-height:14px;height:14px;transform:scaleX(0.9);transform-origin:right top;">286</div>
<div class="t" style="left:76px;top:493px;width:200px;text-align:right;font-size:12px;line-height:14px;height:14px;transform:scaleX(0.9);transform-origin:right top;">0</div>
<div class="t" style="left:116px;top:493px;width:200px;text-align:right;font-size:12px;line-height:14px;height:14px;transform:scaleX(0.9);transform-origin:right top;">3857</div>
<div class="t" style="left:156px;top:493px;width:200px;text-align:right;font-size:12px;line-height:14px;height:14px;transform:scaleX(0.9);transform-origin:right top;">0</div>
<div class="t" style="left:196px;top:493px;width:200px;text-align:right;font-size:12px;line-height:14px;height:14px;transform:scaleX(0.9);transform-origin:right top;">3572</div>
<div class="t" style="left:236px;top:493px;width:200px;text-align:right;font-size:12px;line-height:14px;height:14px;transform:scaleX(0.9);transform-origin:right top;">0</div>
<div class="t" style="left:276px;top:493px;width:200px;text-align:right;font-size:12px;line-height:14px;height:14px;transform:scaleX(0.9);transform-origin:right top;">0</div>
<div class="t" style="left:316px;top:493px;width:200px;text-align:right;font-size:12px;line-height:14px;height:14px;transform:scaleX(0.9);transform-origin:right top;">0</div>
<div class="t" style="left:356px;top:493px;width:200px;text-align:right;font-size:12px;line-height:14px;height:14px;transform:scaleX(0.9);transform-origin:right top;">0</div>
<div class="t" style="left:396px;top:493px;width:200px;text-align:right;font-size:12px;line-height:14px;height:14px;transform:scaleX(0.9);transform-origin:right top;">0</div>
<div class="t" style="left:436px;top:493px;width:200px;text-align:right;font-size:12px;line-height:14px;height:14px;transform:scaleX(0.9);transform-origin:right top;">0</div>
<div style="left:31px;top:508px;width:608px;height:1px;background:#aca899;"></div>
<div style="left:32px;top:509px;width:607px;height:1px;background:#ffffff;"></div>
<div style="left:128px;top:508px;width:1px;height:17px;background:#aca899;"></div>
<div style="left:129px;top:509px;width:1px;height:16px;background:#ffffff;"></div>
<div style="left:237px;top:508px;width:1px;height:17px;background:#aca899;"></div>
<div style="left:238px;top:509px;width:1px;height:16px;background:#ffffff;"></div>
<div style="left:317px;top:508px;width:1px;height:17px;background:#aca899;"></div>
<div style="left:318px;top:509px;width:1px;height:16px;background:#ffffff;"></div>
<div style="left:397px;top:508px;width:1px;height:17px;background:#aca899;"></div>
<div style="left:398px;top:509px;width:1px;height:16px;background:#ffffff;"></div>
<div style="left:477px;top:508px;width:1px;height:17px;background:#aca899;"></div>
<div style="left:478px;top:509px;width:1px;height:16px;background:#ffffff;"></div>
<div style="left:557px;top:508px;width:1px;height:17px;background:#aca899;"></div>
<div style="left:558px;top:509px;width:1px;height:16px;background:#ffffff;"></div>
<div style="left:197px;top:509px;width:1px;height:1px;background:#aca899;"></div>
<div style="left:197px;top:523px;width:1px;height:2px;background:#aca899;"></div>
<div style="left:198px;top:523px;width:1px;height:2px;background:#ffffff;"></div>
<div style="left:277px;top:509px;width:1px;height:1px;background:#aca899;"></div>
<div style="left:277px;top:523px;width:1px;height:2px;background:#aca899;"></div>
<div style="left:278px;top:523px;width:1px;height:2px;background:#ffffff;"></div>
<div style="left:357px;top:509px;width:1px;height:1px;background:#aca899;"></div>
<div style="left:357px;top:523px;width:1px;height:2px;background:#aca899;"></div>
<div style="left:358px;top:523px;width:1px;height:2px;background:#ffffff;"></div>
<div style="left:437px;top:509px;width:1px;height:1px;background:#aca899;"></div>
<div style="left:437px;top:523px;width:1px;height:2px;background:#aca899;"></div>
<div style="left:438px;top:523px;width:1px;height:2px;background:#ffffff;"></div>
<div style="left:517px;top:509px;width:1px;height:1px;background:#aca899;"></div>
<div style="left:517px;top:523px;width:1px;height:2px;background:#aca899;"></div>
<div style="left:518px;top:523px;width:1px;height:2px;background:#ffffff;"></div>
<div style="left:597px;top:509px;width:1px;height:1px;background:#aca899;"></div>
<div style="left:597px;top:523px;width:1px;height:2px;background:#aca899;"></div>
<div style="left:598px;top:523px;width:1px;height:2px;background:#ffffff;"></div>
<div class="t" style="left:-77px;top:510px;width:200px;text-align:right;font-size:12px;line-height:14px;height:14px;transform:scaleX(0.917);transform-origin:right top;">Sales</div>
<div class="t" style="left:36px;top:510px;width:200px;text-align:right;font-size:12px;line-height:14px;height:14px;transform:scaleX(0.9);transform-origin:right top;">1857</div>
<div class="t" style="left:116px;top:510px;width:200px;text-align:right;font-size:12px;line-height:14px;height:14px;transform:scaleX(0.9);transform-origin:right top;">500</div>
<div class="t" style="left:196px;top:510px;width:200px;text-align:right;font-size:12px;line-height:14px;height:14px;transform:scaleX(0.9);transform-origin:right top;">321</div>
<div class="t" style="left:276px;top:510px;width:200px;text-align:right;font-size:12px;line-height:14px;height:14px;transform:scaleX(0.9);transform-origin:right top;">0</div>
<div class="t" style="left:356px;top:510px;width:200px;text-align:right;font-size:12px;line-height:14px;height:14px;transform:scaleX(0.9);transform-origin:right top;">0</div>
<div class="t" style="left:438px;top:510px;width:200px;text-align:right;font-size:12px;line-height:14px;height:14px;transform:scaleX(0.9);transform-origin:right top;">0</div>
<div style="left:31px;top:525px;width:608px;height:1px;background:#aca899;"></div>
<div style="left:32px;top:526px;width:607px;height:1px;background:#ffffff;"></div>
<div style="left:128px;top:525px;width:1px;height:17px;background:#aca899;"></div>
<div style="left:129px;top:526px;width:1px;height:16px;background:#ffffff;"></div>
<div style="left:237px;top:525px;width:1px;height:17px;background:#aca899;"></div>
<div style="left:238px;top:526px;width:1px;height:16px;background:#ffffff;"></div>
<div style="left:317px;top:525px;width:1px;height:17px;background:#aca899;"></div>
<div style="left:318px;top:526px;width:1px;height:16px;background:#ffffff;"></div>
<div style="left:397px;top:525px;width:1px;height:17px;background:#aca899;"></div>
<div style="left:398px;top:526px;width:1px;height:16px;background:#ffffff;"></div>
<div style="left:477px;top:525px;width:1px;height:17px;background:#aca899;"></div>
<div style="left:478px;top:526px;width:1px;height:16px;background:#ffffff;"></div>
<div style="left:557px;top:525px;width:1px;height:17px;background:#aca899;"></div>
<div style="left:558px;top:526px;width:1px;height:16px;background:#ffffff;"></div>
<div style="left:197px;top:526px;width:1px;height:1px;background:#aca899;"></div>
<div style="left:197px;top:540px;width:1px;height:2px;background:#aca899;"></div>
<div style="left:198px;top:540px;width:1px;height:2px;background:#ffffff;"></div>
<div style="left:277px;top:526px;width:1px;height:1px;background:#aca899;"></div>
<div style="left:277px;top:540px;width:1px;height:2px;background:#aca899;"></div>
<div style="left:278px;top:540px;width:1px;height:2px;background:#ffffff;"></div>
<div style="left:357px;top:526px;width:1px;height:1px;background:#aca899;"></div>
<div style="left:357px;top:540px;width:1px;height:2px;background:#aca899;"></div>
<div style="left:358px;top:540px;width:1px;height:2px;background:#ffffff;"></div>
<div style="left:437px;top:526px;width:1px;height:1px;background:#aca899;"></div>
<div style="left:437px;top:540px;width:1px;height:2px;background:#aca899;"></div>
<div style="left:438px;top:540px;width:1px;height:2px;background:#ffffff;"></div>
<div style="left:517px;top:526px;width:1px;height:1px;background:#aca899;"></div>
<div style="left:517px;top:540px;width:1px;height:2px;background:#aca899;"></div>
<div style="left:518px;top:540px;width:1px;height:2px;background:#ffffff;"></div>
<div style="left:597px;top:526px;width:1px;height:1px;background:#aca899;"></div>
<div style="left:597px;top:540px;width:1px;height:2px;background:#aca899;"></div>
<div style="left:598px;top:540px;width:1px;height:2px;background:#ffffff;"></div>
<div class="t" style="left:-77px;top:527px;width:200px;text-align:right;font-size:12px;line-height:14px;height:14px;transform:scaleX(0.917);transform-origin:right top;">Day In Gnd</div>
<div class="t" style="left:36px;top:527px;width:200px;text-align:right;font-size:12px;line-height:14px;height:14px;transform:scaleX(0.9);transform-origin:right top;">-0.4</div>
<div class="t" style="left:116px;top:527px;width:200px;text-align:right;font-size:12px;line-height:14px;height:14px;transform:scaleX(0.9);transform-origin:right top;">5.7</div>
<div class="t" style="left:196px;top:527px;width:200px;text-align:right;font-size:12px;line-height:14px;height:14px;transform:scaleX(0.9);transform-origin:right top;">8.6</div>
<div class="t" style="left:276px;top:527px;width:200px;text-align:right;font-size:12px;line-height:14px;height:14px;transform:scaleX(0.9);transform-origin:right top;">0.0</div>
<div class="t" style="left:356px;top:527px;width:200px;text-align:right;font-size:12px;line-height:14px;height:14px;transform:scaleX(0.9);transform-origin:right top;">0.0</div>
<div class="t" style="left:438px;top:527px;width:200px;text-align:right;font-size:12px;line-height:14px;height:14px;transform:scaleX(0.9);transform-origin:right top;">0.0</div>
<div style="left:31px;top:542px;width:608px;height:1px;background:#aca899;"></div>
<div style="left:32px;top:543px;width:607px;height:1px;background:#ffffff;"></div>
<div style="left:128px;top:542px;width:1px;height:17px;background:#aca899;"></div>
<div style="left:129px;top:543px;width:1px;height:16px;background:#ffffff;"></div>
<div style="left:197px;top:542px;width:1px;height:17px;background:#aca899;"></div>
<div style="left:198px;top:543px;width:1px;height:16px;background:#ffffff;"></div>
<div style="left:237px;top:542px;width:1px;height:17px;background:#aca899;"></div>
<div style="left:238px;top:543px;width:1px;height:16px;background:#ffffff;"></div>
<div style="left:277px;top:542px;width:1px;height:17px;background:#aca899;"></div>
<div style="left:278px;top:543px;width:1px;height:16px;background:#ffffff;"></div>
<div style="left:317px;top:542px;width:1px;height:17px;background:#aca899;"></div>
<div style="left:318px;top:543px;width:1px;height:16px;background:#ffffff;"></div>
<div style="left:357px;top:542px;width:1px;height:17px;background:#aca899;"></div>
<div style="left:358px;top:543px;width:1px;height:16px;background:#ffffff;"></div>
<div style="left:397px;top:542px;width:1px;height:17px;background:#aca899;"></div>
<div style="left:398px;top:543px;width:1px;height:16px;background:#ffffff;"></div>
<div style="left:437px;top:542px;width:1px;height:17px;background:#aca899;"></div>
<div style="left:438px;top:543px;width:1px;height:16px;background:#ffffff;"></div>
<div style="left:477px;top:542px;width:1px;height:17px;background:#aca899;"></div>
<div style="left:478px;top:543px;width:1px;height:16px;background:#ffffff;"></div>
<div style="left:517px;top:542px;width:1px;height:17px;background:#aca899;"></div>
<div style="left:518px;top:543px;width:1px;height:16px;background:#ffffff;"></div>
<div style="left:557px;top:542px;width:1px;height:17px;background:#aca899;"></div>
<div style="left:558px;top:543px;width:1px;height:16px;background:#ffffff;"></div>
<div style="left:597px;top:542px;width:1px;height:17px;background:#aca899;"></div>
<div style="left:598px;top:543px;width:1px;height:16px;background:#ffffff;"></div>
<div class="t" style="left:-77px;top:544px;width:200px;text-align:right;font-size:12px;line-height:14px;height:14px;transform:scaleX(0.917);transform-origin:right top;">Delivery AM/PM</div>
<div class="t" style="left:-4px;top:544px;width:200px;text-align:right;font-size:12px;line-height:14px;height:14px;transform:scaleX(0.9);transform-origin:right top;">10164</div>
<div class="t" style="left:36px;top:544px;width:200px;text-align:right;font-size:12px;line-height:14px;height:14px;transform:scaleX(0.9);transform-origin:right top;">11451</div>
<div class="t" style="left:76px;top:544px;width:200px;text-align:right;font-size:12px;line-height:14px;height:14px;transform:scaleX(0.9);transform-origin:right top;">6118</div>
<div class="t" style="left:116px;top:544px;width:200px;text-align:right;font-size:12px;line-height:14px;height:14px;transform:scaleX(0.9);transform-origin:right top;">6456</div>
<div class="t" style="left:156px;top:544px;width:200px;text-align:right;font-size:12px;line-height:14px;height:14px;transform:scaleX(0.9);transform-origin:right top;">4528</div>
<div class="t" style="left:196px;top:544px;width:200px;text-align:right;font-size:12px;line-height:14px;height:14px;transform:scaleX(0.9);transform-origin:right top;">4724</div>
<div class="t" style="left:236px;top:544px;width:200px;text-align:right;font-size:12px;line-height:14px;height:14px;transform:scaleX(0.9);transform-origin:right top;">0</div>
<div class="t" style="left:276px;top:544px;width:200px;text-align:right;font-size:12px;line-height:14px;height:14px;transform:scaleX(0.9);transform-origin:right top;">0</div>
<div class="t" style="left:316px;top:544px;width:200px;text-align:right;font-size:12px;line-height:14px;height:14px;transform:scaleX(0.9);transform-origin:right top;">0</div>
<div class="t" style="left:356px;top:544px;width:200px;text-align:right;font-size:12px;line-height:14px;height:14px;transform:scaleX(0.9);transform-origin:right top;">0</div>
<div class="t" style="left:396px;top:544px;width:200px;text-align:right;font-size:12px;line-height:14px;height:14px;transform:scaleX(0.9);transform-origin:right top;">0</div>
<div class="t" style="left:436px;top:544px;width:200px;text-align:right;font-size:12px;line-height:14px;height:14px;transform:scaleX(0.9);transform-origin:right top;">0</div>
<div style="left:31px;top:559px;width:608px;height:1px;background:#aca899;"></div>
<div style="left:32px;top:560px;width:607px;height:1px;background:#ffffff;"></div>
<div style="left:33px;top:561px;width:1px;height:59px;background:#000;"></div>
<div style="left:34px;top:561px;width:605px;height:1px;background:#aca899;"></div>
<div style="left:34px;top:562px;width:605px;height:16px;background:#ece9d8;"></div>
<div style="left:35px;top:562px;width:604px;height:1px;background:#ffffff;"></div>
<div style="left:35px;top:562px;width:1px;height:16px;background:#ffffff;"></div>
<div style="left:129px;top:564px;width:1px;height:13px;background:#aca899;"></div>
<div style="left:130px;top:564px;width:1px;height:13px;background:#ffffff;"></div>
<div style="left:237px;top:564px;width:1px;height:13px;background:#aca899;"></div>
<div style="left:238px;top:564px;width:1px;height:13px;background:#ffffff;"></div>
<div style="left:317px;top:564px;width:1px;height:13px;background:#aca899;"></div>
<div style="left:318px;top:564px;width:1px;height:13px;background:#ffffff;"></div>
<div style="left:397px;top:564px;width:1px;height:13px;background:#aca899;"></div>
<div style="left:398px;top:564px;width:1px;height:13px;background:#ffffff;"></div>
<div style="left:477px;top:564px;width:1px;height:13px;background:#aca899;"></div>
<div style="left:478px;top:564px;width:1px;height:13px;background:#ffffff;"></div>
<div style="left:557px;top:564px;width:1px;height:13px;background:#aca899;"></div>
<div style="left:558px;top:564px;width:1px;height:13px;background:#ffffff;"></div>
<div style="left:34px;top:578px;width:605px;height:1px;background:#aca899;"></div>
<div class="t" style="left:41px;top:564px;font-size:12px;line-height:14px;height:14px;transform:scaleX(0.917);transform-origin:left top;">Delivery Total</div>
<div class="t" style="left:152px;top:564px;width:100px;text-align:center;font-size:12px;line-height:14px;height:14px;transform:scaleX(0.917);transform-origin:center top;">G87</div>
<div class="t" style="left:231.5px;top:564px;width:100.0px;text-align:center;font-size:12px;line-height:14px;height:14px;transform:scaleX(0.917);transform-origin:center top;">G90</div>
<div class="t" style="left:307.5px;top:564px;width:100.0px;text-align:center;font-size:12px;line-height:14px;height:14px;transform:scaleX(0.917);transform-origin:center top;">D1UC</div>
<div class="t" style="left:392.5px;top:564px;width:100.0px;text-align:center;font-size:12px;line-height:14px;height:14px;transform:scaleX(0.917);transform-origin:center top;">UNKNOWN</div>
<div class="t" style="left:472.5px;top:564px;width:100.0px;text-align:center;font-size:12px;line-height:14px;height:14px;transform:scaleX(0.917);transform-origin:center top;">UNKNOWN</div>
<div class="t" style="left:555.5px;top:564px;width:100.0px;text-align:center;font-size:12px;line-height:14px;height:14px;transform:scaleX(0.917);transform-origin:center top;">UNKNOWN</div>
<div style="left:34px;top:579px;width:95px;height:17px;background:#316ac5;"></div>
<div style="left:130px;top:579px;width:509px;height:17px;background:#ffffff;"></div>
<div style="left:129px;top:579px;width:1px;height:17px;background:#aca899;"></div>
<div style="left:237px;top:579px;width:1px;height:17px;background:#aca899;"></div>
<div style="left:317px;top:579px;width:1px;height:17px;background:#aca899;"></div>
<div style="left:397px;top:579px;width:1px;height:17px;background:#aca899;"></div>
<div style="left:477px;top:579px;width:1px;height:17px;background:#aca899;"></div>
<div style="left:557px;top:579px;width:1px;height:17px;background:#aca899;"></div>
<div style="left:34px;top:596px;width:605px;height:1px;background:#aca899;"></div>
<div class="t" style="left:-75px;top:581px;width:200px;text-align:right;color:#fff;font-size:12px;line-height:14px;height:14px;transform:scaleX(0.9);transform-origin:right top;">0</div>
<div class="t" style="left:33px;top:581px;width:200px;text-align:right;font-size:12px;line-height:14px;height:14px;transform:scaleX(0.9);transform-origin:right top;">0</div>
<div class="t" style="left:113px;top:581px;width:200px;text-align:right;font-size:12px;line-height:14px;height:14px;transform:scaleX(0.9);transform-origin:right top;">0</div>
<div class="t" style="left:193px;top:581px;width:200px;text-align:right;font-size:12px;line-height:14px;height:14px;transform:scaleX(0.9);transform-origin:right top;">0</div>
<div class="t" style="left:273px;top:581px;width:200px;text-align:right;font-size:12px;line-height:14px;height:14px;transform:scaleX(0.9);transform-origin:right top;">0</div>
<div class="t" style="left:353px;top:581px;width:200px;text-align:right;font-size:12px;line-height:14px;height:14px;transform:scaleX(0.9);transform-origin:right top;">0</div>
<div class="t" style="left:433px;top:581px;width:200px;text-align:right;font-size:12px;line-height:14px;height:14px;transform:scaleX(0.9);transform-origin:right top;">0</div>
<div style="left:34px;top:597px;width:605px;height:22px;background:#808080;"></div>
<div style="left:33px;top:619px;width:606px;height:1px;background:#000;"></div>
<div style="left:33px;top:620px;width:606px;height:1px;background:#f1efe2;"></div>
<div style="left:29px;top:623px;width:610px;height:1px;background:#aca899;"></div>
<div style="left:30px;top:624px;width:609px;height:1px;background:#ffffff;"></div>
</div></body></html>
